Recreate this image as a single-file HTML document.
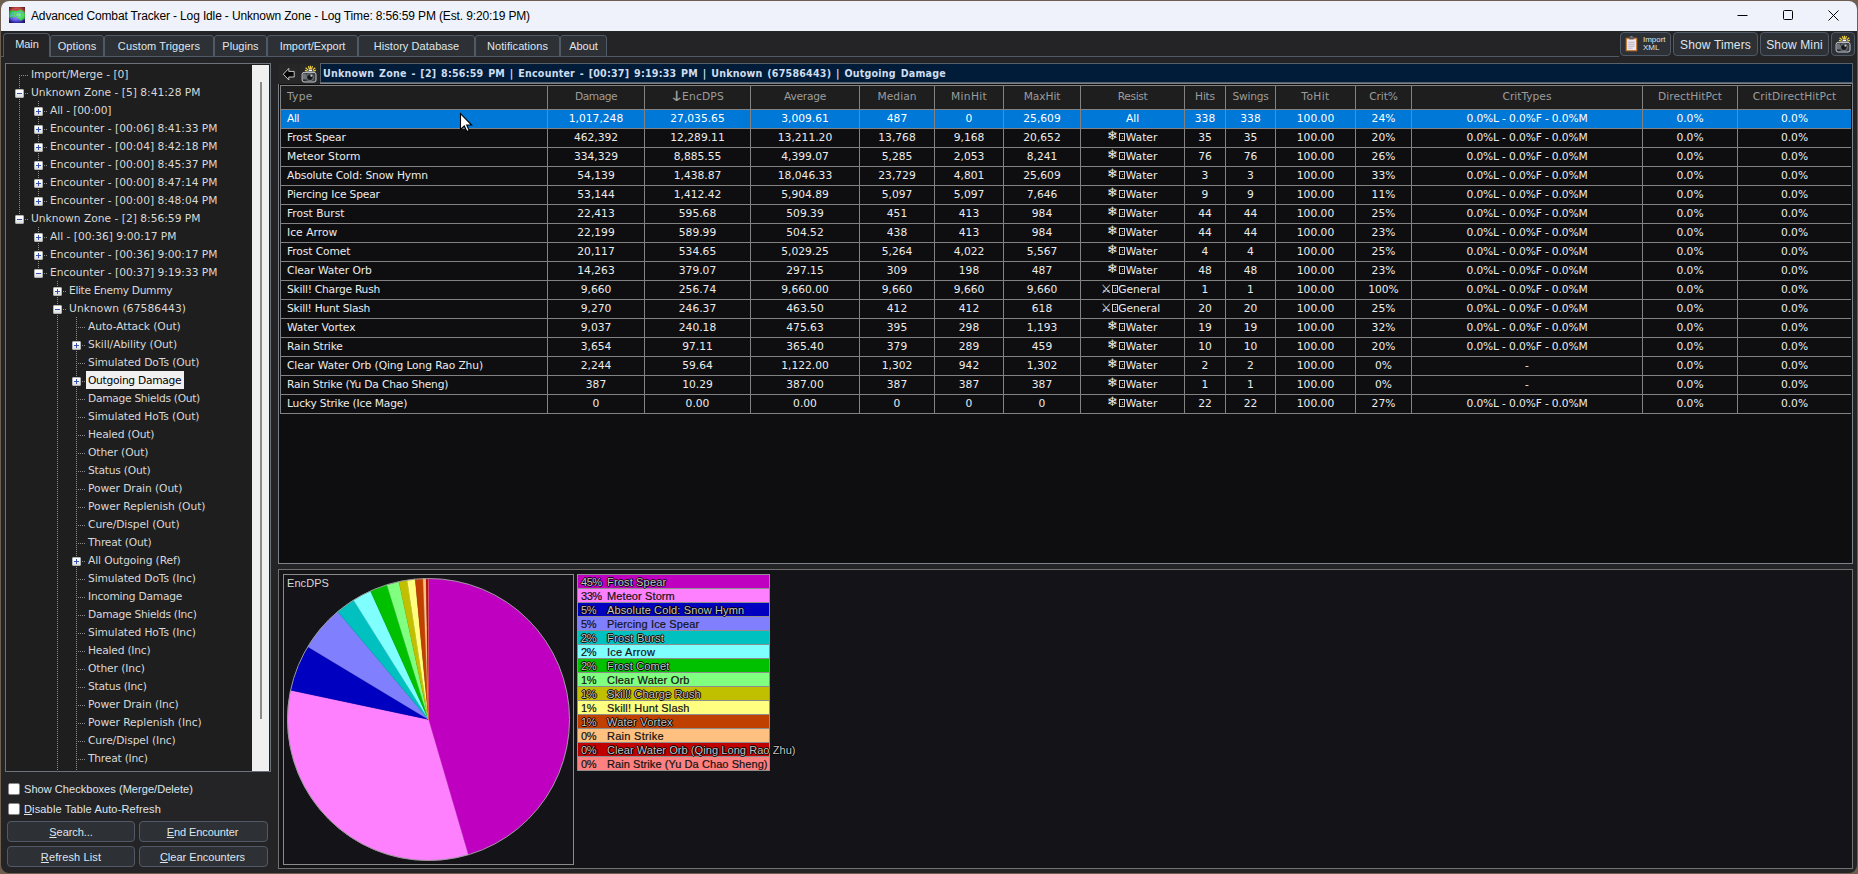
<!DOCTYPE html>
<html><head><meta charset="utf-8"><title>Advanced Combat Tracker</title>
<style>
html,body{margin:0;padding:0;background:#3a3230;}
body{width:1858px;height:874px;overflow:hidden;position:relative;font-family:'Liberation Sans',sans-serif;font-size:12px;}
.a{position:absolute;}
.t{position:absolute;white-space:pre;}
.seg{font-family:'DejaVu Sans','Liberation Sans',sans-serif;}
.segc{font-family:'DejaVu Sans Condensed','DejaVu Sans','Liberation Sans',sans-serif;}
u{text-decoration-thickness:1px;text-underline-offset:1px;}
.sf{font-family:'DejaVu Sans',sans-serif;font-size:13px;font-weight:bold;display:inline-block;width:9px;margin-right:2px;position:relative;top:-1.5px;left:-1px;line-height:0;}
.sw{font-family:'DejaVu Sans',sans-serif;font-size:12px;display:inline-block;width:10px;margin-right:1px;position:relative;top:0px;left:-0.5px;line-height:0;}
.bx{display:inline-block;width:6px;height:8px;border:1px solid rgba(255,255,255,0.8);box-sizing:border-box;margin-right:1px;vertical-align:0px;background:linear-gradient(#d8a860,#d8a860) 2px 2px/1px 1px no-repeat,linear-gradient(#d8a860,#d8a860) 2px 4px/1px 1px no-repeat;}
.ar{font-family:'DejaVu Sans',sans-serif;font-size:14px;line-height:10px;position:relative;top:1px;display:inline-block;transform:scaleX(1.35);margin-right:-1px;}
</style></head><body>
<div class="a" style="left:0px;top:0px;width:1858px;height:874px;background:#6e5e50;"></div>
<div class="a" style="left:1px;top:1px;width:1856px;height:871.6px;background:#242426;border-radius:8px;overflow:hidden;">
<div class="a" style="left:0;top:0;width:1856px;height:30px;background:#eff2fa;"></div>
</div>
<svg class="a" style="left:9px;top:7px" width="16" height="16" viewBox="0 0 16 16"><defs><radialGradient id="vg" cx="50%" cy="50%" r="72%"><stop offset="60%" stop-color="#000" stop-opacity="0"/><stop offset="100%" stop-color="#000" stop-opacity="0.75"/></radialGradient><radialGradient id="gb" cx="45%" cy="30%" r="60%"><stop offset="0" stop-color="#8a86ff"/><stop offset="1" stop-color="#3a30c0"/></radialGradient><radialGradient id="gg" cx="60%" cy="50%" r="60%"><stop offset="0" stop-color="#7cff7c"/><stop offset="1" stop-color="#22b83a"/></radialGradient></defs><rect width="16" height="16" fill="#c84848"/><path d="M0 9H16V16H0Z" fill="url(#gb)"/><path d="M0 4.2L2 3.6 3.5 3.2 5 3.5 7 4 8.5 3.9 10 3 11.5 2.4 13 3 14.5 4.6 16 5.2V12L14 12.5 12.5 13.6 11 13.5 9.5 11.5 8 10.5 6 10 3.5 10.5 0 10.8Z" fill="url(#gg)"/><text x="1" y="10.3" font-family="Liberation Sans, sans-serif" font-size="6.8" font-weight="bold" font-style="italic" fill="#6aa8d8" textLength="13.5" lengthAdjust="spacingAndGlyphs">ACT</text><rect width="16" height="16" fill="url(#vg)"/></svg>
<div class="t" style="left:31px;top:7.5px;height:16px;line-height:16px;font-size:12px;color:#000;letter-spacing:-0.140px;">Advanced Combat Tracker - Log Idle - Unknown Zone - Log Time: 8:56:59 PM (Est. 9:20:19 PM)</div>
<svg class="a" style="left:1730px;top:0" width="126" height="31" viewBox="0 0 126 31"><g stroke="#000" stroke-width="1" fill="none"><path d="M7.5 15.5h10"/><rect x="53.5" y="10.5" width="9" height="9" rx="1"/><path d="M98.5 10.5l10 10M108.5 10.5l-10 10"/></g></svg>
<div class="a" style="left:1px;top:56px;width:1618px;height:1px;background:#505a66;"></div>
<div class="a" style="left:3px;top:33px;width:47px;height:24px;background:#242426;border:1px solid #505a66;border-bottom:none;border-radius:4px 4px 0 0;box-sizing:border-box;"></div>
<div class="t" style="left:3.5px;top:35.5px;height:16px;line-height:16px;font-size:11px;color:#dfe6ee;letter-spacing:-0.036px;width:47px;text-align:center;">Main</div>
<div class="a" style="left:50px;top:35px;width:54px;height:22px;background:#2d3034;border:1px solid #505a66;border-radius:3px 3px 0 0;box-sizing:border-box;"></div>
<div class="t" style="left:50px;top:37.5px;height:16px;line-height:16px;font-size:11px;color:#dfe6ee;letter-spacing:0.097px;width:54px;text-align:center;">Options</div>
<div class="a" style="left:104px;top:35px;width:110px;height:22px;background:#2d3034;border:1px solid #505a66;border-radius:3px 3px 0 0;box-sizing:border-box;"></div>
<div class="t" style="left:104px;top:37.5px;height:16px;line-height:16px;font-size:11px;color:#dfe6ee;letter-spacing:0.106px;width:110px;text-align:center;">Custom Triggers</div>
<div class="a" style="left:214px;top:35px;width:53px;height:22px;background:#2d3034;border:1px solid #505a66;border-radius:3px 3px 0 0;box-sizing:border-box;"></div>
<div class="t" style="left:214px;top:37.5px;height:16px;line-height:16px;font-size:11px;color:#dfe6ee;letter-spacing:0.032px;width:53px;text-align:center;">Plugins</div>
<div class="a" style="left:267px;top:35px;width:91px;height:22px;background:#2d3034;border:1px solid #505a66;border-radius:3px 3px 0 0;box-sizing:border-box;"></div>
<div class="t" style="left:267px;top:37.5px;height:16px;line-height:16px;font-size:11px;color:#dfe6ee;letter-spacing:-0.025px;width:91px;text-align:center;">Import/Export</div>
<div class="a" style="left:358px;top:35px;width:117px;height:22px;background:#2d3034;border:1px solid #505a66;border-radius:3px 3px 0 0;box-sizing:border-box;"></div>
<div class="t" style="left:358px;top:37.5px;height:16px;line-height:16px;font-size:11px;color:#dfe6ee;letter-spacing:0.077px;width:117px;text-align:center;">History Database</div>
<div class="a" style="left:475px;top:35px;width:85px;height:22px;background:#2d3034;border:1px solid #505a66;border-radius:3px 3px 0 0;box-sizing:border-box;"></div>
<div class="t" style="left:475px;top:37.5px;height:16px;line-height:16px;font-size:11px;color:#dfe6ee;letter-spacing:0.083px;width:85px;text-align:center;">Notifications</div>
<div class="a" style="left:560px;top:35px;width:47px;height:22px;background:#2d3034;border:1px solid #505a66;border-radius:3px 3px 0 0;box-sizing:border-box;"></div>
<div class="t" style="left:560px;top:37.5px;height:16px;line-height:16px;font-size:11px;color:#dfe6ee;letter-spacing:-0.090px;width:47px;text-align:center;">About</div>
<div class="a" style="left:1620px;top:32px;width:51px;height:24px;background:#2d3034;border:1px solid #505a66;border-radius:4px;box-sizing:border-box;"></div>
<div class="a" style="left:1673px;top:32px;width:85px;height:24px;background:#2d3034;border:1px solid #505a66;border-radius:4px;box-sizing:border-box;"></div>
<div class="t" style="left:1673px;top:37.0px;height:16px;line-height:16px;font-size:12px;color:#dfe6ee;letter-spacing:0.131px;width:85px;text-align:center;">Show Timers</div>
<div class="a" style="left:1760px;top:32px;width:69px;height:24px;background:#2d3034;border:1px solid #505a66;border-radius:4px;box-sizing:border-box;"></div>
<div class="t" style="left:1760px;top:37.0px;height:16px;line-height:16px;font-size:12px;color:#dfe6ee;letter-spacing:0.138px;width:69px;text-align:center;">Show Mini</div>
<div class="a" style="left:1831px;top:32px;width:24px;height:24px;background:#2d3034;border:1px solid #505a66;border-radius:4px;box-sizing:border-box;"></div>
<svg class="a" style="left:1625px;top:36px" width="13" height="16" viewBox="0 0 13 16"><rect x="0.9" y="1.9" width="11.2" height="13.2" fill="#d88a3c" stroke="#7a5230" stroke-width="0.6"/><rect x="2" y="3.2" width="9" height="10.8" fill="#ebe6f4"/><rect x="4.2" y="0.6" width="4.6" height="2.8" fill="#5a5a60"/><rect x="5.6" y="0" width="1.8" height="1.2" fill="#8a8a90"/><path d="M3.2 6.3h6.4M3.2 8.3h6.4M3.2 10.3h6.4M3.2 12.2h4.4" stroke="#b4acbe" stroke-width="0.9"/></svg>
<div class="t" style="left:1643px;top:34.5px;height:10px;line-height:10px;font-size:8px;color:#dfe6ee;letter-spacing:-0.029px;">Import</div>
<div class="t" style="left:1643px;top:42.8px;height:10px;line-height:10px;font-size:8px;color:#dfe6ee;letter-spacing:0.016px;">XML</div>
<svg class="a" style="left:1835px;top:35px" width="17" height="18" viewBox="0 0 17 18"><g stroke="#f0d040" stroke-width="1.2" stroke-linecap="butt"><path d="M9.4 0.8V4.4M7.3 1.1L8.5 4.4M11.5 1.1L10.3 4.4M4.6 2.8L7 4.9M14.2 2.8L11.8 4.9M3.9 5.4L6.6 6.2M14.9 5.4L12.2 6.2"/></g><rect x="7.6" y="4.8" width="3.6" height="1.6" fill="#fff"/><rect x="5.6" y="6" width="7.6" height="1.6" fill="#70767e"/><rect x="1.1" y="7.4" width="13.9" height="9.6" rx="2" fill="#3c4046" stroke="#c4c7cc" stroke-width="1"/><rect x="2" y="8.6" width="3" height="6" fill="#6c737b"/><rect x="2" y="14.6" width="3" height="1.2" fill="#24272b"/><circle cx="8.9" cy="12.3" r="3.5" fill="#25282c" stroke="#8c9198" stroke-width="0.8"/><circle cx="8.9" cy="12.3" r="2" fill="#15171a"/><circle cx="10.3" cy="10.8" r="1" fill="#c8ccd0"/></svg>
<div class="a" style="left:5px;top:63px;width:266px;height:709px;background:#1e1e1e;border:1px solid #6d7278;box-sizing:border-box;"></div>
<div class="a" style="left:252px;top:65px;width:17px;height:706px;background:#f0f0f0;"></div>
<div class="a" style="left:260px;top:82px;width:2px;height:637px;background:#8a8a8a;"></div>
<div class="a" style="left:19px;top:75px;width:1px;height:144px;background:repeating-linear-gradient(to bottom,#8c8c8c 0 1px,transparent 1px 2px);"></div>
<div class="a" style="left:38px;top:101px;width:1px;height:101px;background:repeating-linear-gradient(to bottom,#8c8c8c 0 1px,transparent 1px 2px);"></div>
<div class="a" style="left:38px;top:227px;width:1px;height:46px;background:repeating-linear-gradient(to bottom,#8c8c8c 0 1px,transparent 1px 2px);"></div>
<div class="a" style="left:57px;top:281px;width:1px;height:490px;background:repeating-linear-gradient(to bottom,#8c8c8c 0 1px,transparent 1px 2px);"></div>
<div class="a" style="left:76px;top:317px;width:1px;height:454px;background:repeating-linear-gradient(to bottom,#8c8c8c 0 1px,transparent 1px 2px);"></div>
<div class="a" style="left:19px;top:75px;width:9px;height:1px;background:repeating-linear-gradient(to right,#8c8c8c 0 1px,transparent 1px 2px);"></div>
<div class="t seg" style="left:31px;top:67.0px;height:16px;line-height:16px;font-size:10.7px;color:#d8d8d8;letter-spacing:-0.046px;">Import/Merge - [0]</div>
<div class="a" style="left:25px;top:93px;width:3px;height:1px;background:repeating-linear-gradient(to right,#8c8c8c 0 1px,transparent 1px 2px);"></div>
<div class="a" style="left:15px;top:89px;width:9px;height:9px;background:linear-gradient(#ffffff 30%,#dcdcdc);border:1px solid #b4b4b4;box-sizing:border-box;border-radius:1px;"></div>
<div class="a" style="left:17px;top:93px;width:5px;height:1px;background:#3454b4;"></div>
<div class="t seg" style="left:31px;top:85.0px;height:16px;line-height:16px;font-size:10.7px;color:#d8d8d8;letter-spacing:-0.006px;">Unknown Zone - [5] 8:41:28 PM</div>
<div class="a" style="left:44px;top:111px;width:3px;height:1px;background:repeating-linear-gradient(to right,#8c8c8c 0 1px,transparent 1px 2px);"></div>
<div class="a" style="left:34px;top:107px;width:9px;height:9px;background:linear-gradient(#ffffff 30%,#dcdcdc);border:1px solid #b4b4b4;box-sizing:border-box;border-radius:1px;"></div>
<div class="a" style="left:36px;top:111px;width:5px;height:1px;background:#3454b4;"></div>
<div class="a" style="left:38px;top:109px;width:1px;height:5px;background:#3454b4;"></div>
<div class="t seg" style="left:50px;top:103.0px;height:16px;line-height:16px;font-size:10.7px;color:#d8d8d8;letter-spacing:-0.127px;">All - [00:00]</div>
<div class="a" style="left:44px;top:129px;width:3px;height:1px;background:repeating-linear-gradient(to right,#8c8c8c 0 1px,transparent 1px 2px);"></div>
<div class="a" style="left:34px;top:125px;width:9px;height:9px;background:linear-gradient(#ffffff 30%,#dcdcdc);border:1px solid #b4b4b4;box-sizing:border-box;border-radius:1px;"></div>
<div class="a" style="left:36px;top:129px;width:5px;height:1px;background:#3454b4;"></div>
<div class="a" style="left:38px;top:127px;width:1px;height:5px;background:#3454b4;"></div>
<div class="t seg" style="left:50px;top:121.0px;height:16px;line-height:16px;font-size:10.7px;color:#d8d8d8;letter-spacing:-0.020px;">Encounter - [00:06] 8:41:33 PM</div>
<div class="a" style="left:44px;top:147px;width:3px;height:1px;background:repeating-linear-gradient(to right,#8c8c8c 0 1px,transparent 1px 2px);"></div>
<div class="a" style="left:34px;top:143px;width:9px;height:9px;background:linear-gradient(#ffffff 30%,#dcdcdc);border:1px solid #b4b4b4;box-sizing:border-box;border-radius:1px;"></div>
<div class="a" style="left:36px;top:147px;width:5px;height:1px;background:#3454b4;"></div>
<div class="a" style="left:38px;top:145px;width:1px;height:5px;background:#3454b4;"></div>
<div class="t seg" style="left:50px;top:139.0px;height:16px;line-height:16px;font-size:10.7px;color:#d8d8d8;letter-spacing:-0.020px;">Encounter - [00:04] 8:42:18 PM</div>
<div class="a" style="left:44px;top:165px;width:3px;height:1px;background:repeating-linear-gradient(to right,#8c8c8c 0 1px,transparent 1px 2px);"></div>
<div class="a" style="left:34px;top:161px;width:9px;height:9px;background:linear-gradient(#ffffff 30%,#dcdcdc);border:1px solid #b4b4b4;box-sizing:border-box;border-radius:1px;"></div>
<div class="a" style="left:36px;top:165px;width:5px;height:1px;background:#3454b4;"></div>
<div class="a" style="left:38px;top:163px;width:1px;height:5px;background:#3454b4;"></div>
<div class="t seg" style="left:50px;top:157.0px;height:16px;line-height:16px;font-size:10.7px;color:#d8d8d8;letter-spacing:-0.020px;">Encounter - [00:00] 8:45:37 PM</div>
<div class="a" style="left:44px;top:183px;width:3px;height:1px;background:repeating-linear-gradient(to right,#8c8c8c 0 1px,transparent 1px 2px);"></div>
<div class="a" style="left:34px;top:179px;width:9px;height:9px;background:linear-gradient(#ffffff 30%,#dcdcdc);border:1px solid #b4b4b4;box-sizing:border-box;border-radius:1px;"></div>
<div class="a" style="left:36px;top:183px;width:5px;height:1px;background:#3454b4;"></div>
<div class="a" style="left:38px;top:181px;width:1px;height:5px;background:#3454b4;"></div>
<div class="t seg" style="left:50px;top:175.0px;height:16px;line-height:16px;font-size:10.7px;color:#d8d8d8;letter-spacing:-0.020px;">Encounter - [00:00] 8:47:14 PM</div>
<div class="a" style="left:44px;top:201px;width:3px;height:1px;background:repeating-linear-gradient(to right,#8c8c8c 0 1px,transparent 1px 2px);"></div>
<div class="a" style="left:34px;top:197px;width:9px;height:9px;background:linear-gradient(#ffffff 30%,#dcdcdc);border:1px solid #b4b4b4;box-sizing:border-box;border-radius:1px;"></div>
<div class="a" style="left:36px;top:201px;width:5px;height:1px;background:#3454b4;"></div>
<div class="a" style="left:38px;top:199px;width:1px;height:5px;background:#3454b4;"></div>
<div class="t seg" style="left:50px;top:193.0px;height:16px;line-height:16px;font-size:10.7px;color:#d8d8d8;letter-spacing:-0.020px;">Encounter - [00:00] 8:48:04 PM</div>
<div class="a" style="left:25px;top:219px;width:3px;height:1px;background:repeating-linear-gradient(to right,#8c8c8c 0 1px,transparent 1px 2px);"></div>
<div class="a" style="left:15px;top:215px;width:9px;height:9px;background:linear-gradient(#ffffff 30%,#dcdcdc);border:1px solid #b4b4b4;box-sizing:border-box;border-radius:1px;"></div>
<div class="a" style="left:17px;top:219px;width:5px;height:1px;background:#3454b4;"></div>
<div class="t seg" style="left:31px;top:211.0px;height:16px;line-height:16px;font-size:10.7px;color:#d8d8d8;letter-spacing:-0.006px;">Unknown Zone - [2] 8:56:59 PM</div>
<div class="a" style="left:44px;top:237px;width:3px;height:1px;background:repeating-linear-gradient(to right,#8c8c8c 0 1px,transparent 1px 2px);"></div>
<div class="a" style="left:34px;top:233px;width:9px;height:9px;background:linear-gradient(#ffffff 30%,#dcdcdc);border:1px solid #b4b4b4;box-sizing:border-box;border-radius:1px;"></div>
<div class="a" style="left:36px;top:237px;width:5px;height:1px;background:#3454b4;"></div>
<div class="a" style="left:38px;top:235px;width:1px;height:5px;background:#3454b4;"></div>
<div class="t seg" style="left:50px;top:229.0px;height:16px;line-height:16px;font-size:10.7px;color:#d8d8d8;letter-spacing:-0.008px;">All - [00:36] 9:00:17 PM</div>
<div class="a" style="left:44px;top:255px;width:3px;height:1px;background:repeating-linear-gradient(to right,#8c8c8c 0 1px,transparent 1px 2px);"></div>
<div class="a" style="left:34px;top:251px;width:9px;height:9px;background:linear-gradient(#ffffff 30%,#dcdcdc);border:1px solid #b4b4b4;box-sizing:border-box;border-radius:1px;"></div>
<div class="a" style="left:36px;top:255px;width:5px;height:1px;background:#3454b4;"></div>
<div class="a" style="left:38px;top:253px;width:1px;height:5px;background:#3454b4;"></div>
<div class="t seg" style="left:50px;top:247.0px;height:16px;line-height:16px;font-size:10.7px;color:#d8d8d8;letter-spacing:-0.020px;">Encounter - [00:36] 9:00:17 PM</div>
<div class="a" style="left:44px;top:273px;width:3px;height:1px;background:repeating-linear-gradient(to right,#8c8c8c 0 1px,transparent 1px 2px);"></div>
<div class="a" style="left:34px;top:269px;width:9px;height:9px;background:linear-gradient(#ffffff 30%,#dcdcdc);border:1px solid #b4b4b4;box-sizing:border-box;border-radius:1px;"></div>
<div class="a" style="left:36px;top:273px;width:5px;height:1px;background:#3454b4;"></div>
<div class="t seg" style="left:50px;top:265.0px;height:16px;line-height:16px;font-size:10.7px;color:#d8d8d8;letter-spacing:-0.020px;">Encounter - [00:37] 9:19:33 PM</div>
<div class="a" style="left:63px;top:291px;width:3px;height:1px;background:repeating-linear-gradient(to right,#8c8c8c 0 1px,transparent 1px 2px);"></div>
<div class="a" style="left:53px;top:287px;width:9px;height:9px;background:linear-gradient(#ffffff 30%,#dcdcdc);border:1px solid #b4b4b4;box-sizing:border-box;border-radius:1px;"></div>
<div class="a" style="left:55px;top:291px;width:5px;height:1px;background:#3454b4;"></div>
<div class="a" style="left:57px;top:289px;width:1px;height:5px;background:#3454b4;"></div>
<div class="t seg" style="left:69px;top:283.0px;height:16px;line-height:16px;font-size:10.7px;color:#d8d8d8;letter-spacing:-0.356px;">Elite Enemy Dummy</div>
<div class="a" style="left:63px;top:309px;width:3px;height:1px;background:repeating-linear-gradient(to right,#8c8c8c 0 1px,transparent 1px 2px);"></div>
<div class="a" style="left:53px;top:305px;width:9px;height:9px;background:linear-gradient(#ffffff 30%,#dcdcdc);border:1px solid #b4b4b4;box-sizing:border-box;border-radius:1px;"></div>
<div class="a" style="left:55px;top:309px;width:5px;height:1px;background:#3454b4;"></div>
<div class="t seg" style="left:69px;top:301.0px;height:16px;line-height:16px;font-size:10.7px;color:#d8d8d8;letter-spacing:0.069px;">Unknown (67586443)</div>
<div class="a" style="left:76px;top:327px;width:9px;height:1px;background:repeating-linear-gradient(to right,#8c8c8c 0 1px,transparent 1px 2px);"></div>
<div class="t seg" style="left:88px;top:319.0px;height:16px;line-height:16px;font-size:10.7px;color:#d8d8d8;letter-spacing:-0.075px;">Auto-Attack (Out)</div>
<div class="a" style="left:82px;top:345px;width:3px;height:1px;background:repeating-linear-gradient(to right,#8c8c8c 0 1px,transparent 1px 2px);"></div>
<div class="a" style="left:72px;top:341px;width:9px;height:9px;background:linear-gradient(#ffffff 30%,#dcdcdc);border:1px solid #b4b4b4;box-sizing:border-box;border-radius:1px;"></div>
<div class="a" style="left:74px;top:345px;width:5px;height:1px;background:#3454b4;"></div>
<div class="a" style="left:76px;top:343px;width:1px;height:5px;background:#3454b4;"></div>
<div class="t seg" style="left:88px;top:337.0px;height:16px;line-height:16px;font-size:10.7px;color:#d8d8d8;letter-spacing:-0.059px;">Skill/Ability (Out)</div>
<div class="a" style="left:76px;top:363px;width:9px;height:1px;background:repeating-linear-gradient(to right,#8c8c8c 0 1px,transparent 1px 2px);"></div>
<div class="t seg" style="left:88px;top:355.0px;height:16px;line-height:16px;font-size:10.7px;color:#d8d8d8;letter-spacing:-0.116px;">Simulated DoTs (Out)</div>
<div class="a" style="left:82px;top:381px;width:3px;height:1px;background:repeating-linear-gradient(to right,#8c8c8c 0 1px,transparent 1px 2px);"></div>
<div class="a" style="left:72px;top:377px;width:9px;height:9px;background:linear-gradient(#ffffff 30%,#dcdcdc);border:1px solid #b4b4b4;box-sizing:border-box;border-radius:1px;"></div>
<div class="a" style="left:74px;top:381px;width:5px;height:1px;background:#3454b4;"></div>
<div class="a" style="left:76px;top:379px;width:1px;height:5px;background:#3454b4;"></div>
<div class="a" style="left:86px;top:371px;width:98px;height:18px;background:#f0f0f0;"></div>
<div class="t seg" style="left:88px;top:373.0px;height:16px;line-height:16px;font-size:10.7px;color:#000;letter-spacing:-0.296px;">Outgoing Damage</div>
<div class="a" style="left:76px;top:399px;width:9px;height:1px;background:repeating-linear-gradient(to right,#8c8c8c 0 1px,transparent 1px 2px);"></div>
<div class="t seg" style="left:88px;top:391.0px;height:16px;line-height:16px;font-size:10.7px;color:#d8d8d8;letter-spacing:-0.302px;">Damage Shields (Out)</div>
<div class="a" style="left:76px;top:417px;width:9px;height:1px;background:repeating-linear-gradient(to right,#8c8c8c 0 1px,transparent 1px 2px);"></div>
<div class="t seg" style="left:88px;top:409.0px;height:16px;line-height:16px;font-size:10.7px;color:#d8d8d8;letter-spacing:-0.106px;">Simulated HoTs (Out)</div>
<div class="a" style="left:76px;top:435px;width:9px;height:1px;background:repeating-linear-gradient(to right,#8c8c8c 0 1px,transparent 1px 2px);"></div>
<div class="t seg" style="left:88px;top:427.0px;height:16px;line-height:16px;font-size:10.7px;color:#d8d8d8;letter-spacing:-0.192px;">Healed (Out)</div>
<div class="a" style="left:76px;top:453px;width:9px;height:1px;background:repeating-linear-gradient(to right,#8c8c8c 0 1px,transparent 1px 2px);"></div>
<div class="t seg" style="left:88px;top:445.0px;height:16px;line-height:16px;font-size:10.7px;color:#d8d8d8;letter-spacing:-0.106px;">Other (Out)</div>
<div class="a" style="left:76px;top:471px;width:9px;height:1px;background:repeating-linear-gradient(to right,#8c8c8c 0 1px,transparent 1px 2px);"></div>
<div class="t seg" style="left:88px;top:463.0px;height:16px;line-height:16px;font-size:10.7px;color:#d8d8d8;letter-spacing:-0.231px;">Status (Out)</div>
<div class="a" style="left:76px;top:489px;width:9px;height:1px;background:repeating-linear-gradient(to right,#8c8c8c 0 1px,transparent 1px 2px);"></div>
<div class="t seg" style="left:88px;top:481.0px;height:16px;line-height:16px;font-size:10.7px;color:#d8d8d8;letter-spacing:-0.085px;">Power Drain (Out)</div>
<div class="a" style="left:76px;top:507px;width:9px;height:1px;background:repeating-linear-gradient(to right,#8c8c8c 0 1px,transparent 1px 2px);"></div>
<div class="t seg" style="left:88px;top:499.0px;height:16px;line-height:16px;font-size:10.7px;color:#d8d8d8;letter-spacing:-0.065px;">Power Replenish (Out)</div>
<div class="a" style="left:76px;top:525px;width:9px;height:1px;background:repeating-linear-gradient(to right,#8c8c8c 0 1px,transparent 1px 2px);"></div>
<div class="t seg" style="left:88px;top:517.0px;height:16px;line-height:16px;font-size:10.7px;color:#d8d8d8;letter-spacing:-0.075px;">Cure/Dispel (Out)</div>
<div class="a" style="left:76px;top:543px;width:9px;height:1px;background:repeating-linear-gradient(to right,#8c8c8c 0 1px,transparent 1px 2px);"></div>
<div class="t seg" style="left:88px;top:535.0px;height:16px;line-height:16px;font-size:10.7px;color:#d8d8d8;letter-spacing:-0.199px;">Threat (Out)</div>
<div class="a" style="left:82px;top:561px;width:3px;height:1px;background:repeating-linear-gradient(to right,#8c8c8c 0 1px,transparent 1px 2px);"></div>
<div class="a" style="left:72px;top:557px;width:9px;height:9px;background:linear-gradient(#ffffff 30%,#dcdcdc);border:1px solid #b4b4b4;box-sizing:border-box;border-radius:1px;"></div>
<div class="a" style="left:74px;top:561px;width:5px;height:1px;background:#3454b4;"></div>
<div class="a" style="left:76px;top:559px;width:1px;height:5px;background:#3454b4;"></div>
<div class="t seg" style="left:88px;top:553.0px;height:16px;line-height:16px;font-size:10.7px;color:#d8d8d8;letter-spacing:-0.128px;">All Outgoing (Ref)</div>
<div class="a" style="left:76px;top:579px;width:9px;height:1px;background:repeating-linear-gradient(to right,#8c8c8c 0 1px,transparent 1px 2px);"></div>
<div class="t seg" style="left:88px;top:571.0px;height:16px;line-height:16px;font-size:10.7px;color:#d8d8d8;letter-spacing:-0.112px;">Simulated DoTs (Inc)</div>
<div class="a" style="left:76px;top:597px;width:9px;height:1px;background:repeating-linear-gradient(to right,#8c8c8c 0 1px,transparent 1px 2px);"></div>
<div class="t seg" style="left:88px;top:589.0px;height:16px;line-height:16px;font-size:10.7px;color:#d8d8d8;letter-spacing:-0.239px;">Incoming Damage</div>
<div class="a" style="left:76px;top:615px;width:9px;height:1px;background:repeating-linear-gradient(to right,#8c8c8c 0 1px,transparent 1px 2px);"></div>
<div class="t seg" style="left:88px;top:607.0px;height:16px;line-height:16px;font-size:10.7px;color:#d8d8d8;letter-spacing:-0.298px;">Damage Shields (Inc)</div>
<div class="a" style="left:76px;top:633px;width:9px;height:1px;background:repeating-linear-gradient(to right,#8c8c8c 0 1px,transparent 1px 2px);"></div>
<div class="t seg" style="left:88px;top:625.0px;height:16px;line-height:16px;font-size:10.7px;color:#d8d8d8;letter-spacing:-0.102px;">Simulated HoTs (Inc)</div>
<div class="a" style="left:76px;top:651px;width:9px;height:1px;background:repeating-linear-gradient(to right,#8c8c8c 0 1px,transparent 1px 2px);"></div>
<div class="t seg" style="left:88px;top:643.0px;height:16px;line-height:16px;font-size:10.7px;color:#d8d8d8;letter-spacing:-0.211px;">Healed (Inc)</div>
<div class="a" style="left:76px;top:669px;width:9px;height:1px;background:repeating-linear-gradient(to right,#8c8c8c 0 1px,transparent 1px 2px);"></div>
<div class="t seg" style="left:88px;top:661.0px;height:16px;line-height:16px;font-size:10.7px;color:#d8d8d8;letter-spacing:-0.099px;">Other (Inc)</div>
<div class="a" style="left:76px;top:687px;width:9px;height:1px;background:repeating-linear-gradient(to right,#8c8c8c 0 1px,transparent 1px 2px);"></div>
<div class="t seg" style="left:88px;top:679.0px;height:16px;line-height:16px;font-size:10.7px;color:#d8d8d8;letter-spacing:-0.251px;">Status (Inc)</div>
<div class="a" style="left:76px;top:705px;width:9px;height:1px;background:repeating-linear-gradient(to right,#8c8c8c 0 1px,transparent 1px 2px);"></div>
<div class="t seg" style="left:88px;top:697.0px;height:16px;line-height:16px;font-size:10.7px;color:#d8d8d8;letter-spacing:-0.092px;">Power Drain (Inc)</div>
<div class="a" style="left:76px;top:723px;width:9px;height:1px;background:repeating-linear-gradient(to right,#8c8c8c 0 1px,transparent 1px 2px);"></div>
<div class="t seg" style="left:88px;top:715.0px;height:16px;line-height:16px;font-size:10.7px;color:#d8d8d8;letter-spacing:-0.076px;">Power Replenish (Inc)</div>
<div class="a" style="left:76px;top:741px;width:9px;height:1px;background:repeating-linear-gradient(to right,#8c8c8c 0 1px,transparent 1px 2px);"></div>
<div class="t seg" style="left:88px;top:733.0px;height:16px;line-height:16px;font-size:10.7px;color:#d8d8d8;letter-spacing:-0.089px;">Cure/Dispel (Inc)</div>
<div class="a" style="left:76px;top:759px;width:9px;height:1px;background:repeating-linear-gradient(to right,#8c8c8c 0 1px,transparent 1px 2px);"></div>
<div class="t seg" style="left:88px;top:751.0px;height:16px;line-height:16px;font-size:10.7px;color:#d8d8d8;letter-spacing:-0.219px;">Threat (Inc)</div>
<div class="a" style="left:8px;top:783px;width:12px;height:12px;background:#fff;border:1px solid #888;border-radius:2px;box-sizing:border-box;"></div>
<div class="a" style="left:8px;top:803px;width:12px;height:12px;background:#fff;border:1px solid #888;border-radius:2px;box-sizing:border-box;"></div>
<div class="t" style="left:24px;top:781.0px;height:16px;line-height:16px;font-size:11px;color:#dfe6ee;letter-spacing:0.049px;">Show Checkboxes (Merge/Delete)</div>
<div class="t" style="left:24px;top:801.0px;height:16px;line-height:16px;font-size:11px;color:#dfe6ee;letter-spacing:0.150px;"><u>D</u>isable Table Auto-Refresh</div>
<div class="a" style="left:7px;top:821px;width:128px;height:21px;background:#2d3034;border:1px solid #505a66;border-radius:4px;box-sizing:border-box;"></div>
<div class="t" style="left:7px;top:823.5px;height:16px;line-height:16px;font-size:11px;color:#dfe6ee;letter-spacing:-0.081px;width:128px;text-align:center;"><u>S</u>earch...</div>
<div class="a" style="left:139px;top:821px;width:129px;height:21px;background:#2d3034;border:1px solid #505a66;border-radius:4px;box-sizing:border-box;"></div>
<div class="t" style="left:138px;top:823.5px;height:16px;line-height:16px;font-size:11px;color:#dfe6ee;letter-spacing:-0.106px;width:129px;text-align:center;"><u>E</u>nd Encounter</div>
<div class="a" style="left:7px;top:846px;width:128px;height:21px;background:#2d3034;border:1px solid #505a66;border-radius:4px;box-sizing:border-box;"></div>
<div class="t" style="left:7px;top:848.5px;height:16px;line-height:16px;font-size:11px;color:#dfe6ee;letter-spacing:0.133px;width:128px;text-align:center;"><u>R</u>efresh List</div>
<div class="a" style="left:139px;top:846px;width:129px;height:21px;background:#2d3034;border:1px solid #505a66;border-radius:4px;box-sizing:border-box;"></div>
<div class="t" style="left:138px;top:848.5px;height:16px;line-height:16px;font-size:11px;color:#dfe6ee;letter-spacing:0.013px;width:129px;text-align:center;"><u>C</u>lear Encounters</div>
<div class="a" style="left:278px;top:83px;width:1575px;height:481px;background:#0e0e10;border:1px solid #7c818a;box-sizing:border-box;"></div>
<div class="a" style="left:278px;top:83px;width:42px;height:1px;background:#242426;"></div>
<div class="a" style="left:279px;top:64px;width:19px;height:20px;background:#272727;"></div>
<div class="a" style="left:299px;top:64px;width:20px;height:20px;background:#272727;"></div>
<svg class="a" style="left:281px;top:66px" width="16" height="16" viewBox="0 0 16 16"><path d="M2.3 8.2L7.8 2.4V5.4H13.2V11H7.8V14Z" fill="#050505" stroke="#c4c4c4" stroke-width="1" stroke-linejoin="miter"/></svg>
<svg class="a" style="left:301px;top:65px" width="17" height="18" viewBox="0 0 17 18"><g stroke="#f0d040" stroke-width="1.2" stroke-linecap="butt"><path d="M9.4 0.8V4.4M7.3 1.1L8.5 4.4M11.5 1.1L10.3 4.4M4.6 2.8L7 4.9M14.2 2.8L11.8 4.9M3.9 5.4L6.6 6.2M14.9 5.4L12.2 6.2"/></g><rect x="7.6" y="4.8" width="3.6" height="1.6" fill="#fff"/><rect x="5.6" y="6" width="7.6" height="1.6" fill="#70767e"/><rect x="1.1" y="7.4" width="13.9" height="9.6" rx="2" fill="#3c4046" stroke="#c4c7cc" stroke-width="1"/><rect x="2" y="8.6" width="3" height="6" fill="#6c737b"/><rect x="2" y="14.6" width="3" height="1.2" fill="#24272b"/><circle cx="8.9" cy="12.3" r="3.5" fill="#25282c" stroke="#8c9198" stroke-width="0.8"/><circle cx="8.9" cy="12.3" r="2" fill="#15171a"/><circle cx="10.3" cy="10.8" r="1" fill="#c8ccd0"/></svg>
<div class="a" style="left:320px;top:63px;width:1533px;height:20px;background:#001c38;border:1px solid #5a6068;box-sizing:border-box;"></div>
<div class="t segc" style="left:323px;top:65.0px;height:16px;line-height:16px;font-size:10.6px;color:#cedcf0;letter-spacing:0.222px;font-weight:bold;word-spacing:1.2px;">Unknown Zone - [2] 8:56:59 PM | Encounter - [00:37] 9:19:33 PM | Unknown (67586443) | Outgoing Damage</div>
<div class="a" style="left:280px;top:85px;width:1571px;height:25px;background:#1e1e1e;"></div>
<div class="a" style="left:280px;top:110px;width:1571px;height:18px;background:#0078d7;"></div>
<div class="a" style="left:280px;top:85px;width:1571px;height:1px;background:#828282;"></div>
<div class="a" style="left:280px;top:109px;width:1571px;height:1px;background:#828282;"></div>
<div class="a" style="left:280px;top:128px;width:1571px;height:1px;background:#828282;"></div>
<div class="a" style="left:280px;top:147px;width:1571px;height:1px;background:#828282;"></div>
<div class="a" style="left:280px;top:166px;width:1571px;height:1px;background:#828282;"></div>
<div class="a" style="left:280px;top:185px;width:1571px;height:1px;background:#828282;"></div>
<div class="a" style="left:280px;top:204px;width:1571px;height:1px;background:#828282;"></div>
<div class="a" style="left:280px;top:223px;width:1571px;height:1px;background:#828282;"></div>
<div class="a" style="left:280px;top:242px;width:1571px;height:1px;background:#828282;"></div>
<div class="a" style="left:280px;top:261px;width:1571px;height:1px;background:#828282;"></div>
<div class="a" style="left:280px;top:280px;width:1571px;height:1px;background:#828282;"></div>
<div class="a" style="left:280px;top:299px;width:1571px;height:1px;background:#828282;"></div>
<div class="a" style="left:280px;top:318px;width:1571px;height:1px;background:#828282;"></div>
<div class="a" style="left:280px;top:337px;width:1571px;height:1px;background:#828282;"></div>
<div class="a" style="left:280px;top:356px;width:1571px;height:1px;background:#828282;"></div>
<div class="a" style="left:280px;top:375px;width:1571px;height:1px;background:#828282;"></div>
<div class="a" style="left:280px;top:394px;width:1571px;height:1px;background:#828282;"></div>
<div class="a" style="left:280px;top:413px;width:1571px;height:1px;background:#828282;"></div>
<div class="a" style="left:280px;top:85px;width:1px;height:329px;background:#828282;"></div>
<div class="a" style="left:547px;top:85px;width:1px;height:329px;background:#828282;"></div>
<div class="a" style="left:644px;top:85px;width:1px;height:329px;background:#828282;"></div>
<div class="a" style="left:750px;top:85px;width:1px;height:329px;background:#828282;"></div>
<div class="a" style="left:859px;top:85px;width:1px;height:329px;background:#828282;"></div>
<div class="a" style="left:934px;top:85px;width:1px;height:329px;background:#828282;"></div>
<div class="a" style="left:1003px;top:85px;width:1px;height:329px;background:#828282;"></div>
<div class="a" style="left:1080px;top:85px;width:1px;height:329px;background:#828282;"></div>
<div class="a" style="left:1184px;top:85px;width:1px;height:329px;background:#828282;"></div>
<div class="a" style="left:1225px;top:85px;width:1px;height:329px;background:#828282;"></div>
<div class="a" style="left:1275px;top:85px;width:1px;height:329px;background:#828282;"></div>
<div class="a" style="left:1355px;top:85px;width:1px;height:329px;background:#828282;"></div>
<div class="a" style="left:1411px;top:85px;width:1px;height:329px;background:#828282;"></div>
<div class="a" style="left:1642px;top:85px;width:1px;height:329px;background:#828282;"></div>
<div class="a" style="left:1737px;top:85px;width:1px;height:329px;background:#828282;"></div>
<div class="t seg" style="left:287px;top:88.7px;height:16px;line-height:16px;font-size:10.7px;color:#9c9c9c;letter-spacing:0.238px;">Type</div>
<div class="t seg" style="left:548px;top:88.7px;height:16px;line-height:16px;font-size:10.7px;color:#9c9c9c;letter-spacing:-0.518px;width:96px;text-align:center;">Damage</div>
<div class="t seg" style="left:645px;top:88.7px;height:16px;line-height:16px;font-size:10.7px;color:#9c9c9c;letter-spacing:0.167px;width:105px;text-align:center;"><span class="ar">↓</span>EncDPS</div>
<div class="t seg" style="left:751px;top:88.7px;height:16px;line-height:16px;font-size:10.7px;color:#9c9c9c;letter-spacing:-0.270px;width:108px;text-align:center;">Average</div>
<div class="t seg" style="left:860px;top:88.7px;height:16px;line-height:16px;font-size:10.7px;color:#9c9c9c;letter-spacing:0.021px;width:74px;text-align:center;">Median</div>
<div class="t seg" style="left:935px;top:88.7px;height:16px;line-height:16px;font-size:10.7px;color:#9c9c9c;letter-spacing:0.305px;width:68px;text-align:center;">MinHit</div>
<div class="t seg" style="left:1004px;top:88.7px;height:16px;line-height:16px;font-size:10.7px;color:#9c9c9c;letter-spacing:-0.099px;width:76px;text-align:center;">MaxHit</div>
<div class="t seg" style="left:1081px;top:88.7px;height:16px;line-height:16px;font-size:10.7px;color:#9c9c9c;letter-spacing:-0.355px;width:103px;text-align:center;">Resist</div>
<div class="t seg" style="left:1185px;top:88.7px;height:16px;line-height:16px;font-size:10.7px;color:#9c9c9c;letter-spacing:-0.241px;width:40px;text-align:center;">Hits</div>
<div class="t seg" style="left:1226px;top:88.7px;height:16px;line-height:16px;font-size:10.7px;color:#9c9c9c;letter-spacing:-0.304px;width:49px;text-align:center;">Swings</div>
<div class="t seg" style="left:1276px;top:88.7px;height:16px;line-height:16px;font-size:10.7px;color:#9c9c9c;letter-spacing:0.389px;width:79px;text-align:center;">ToHit</div>
<div class="t seg" style="left:1356px;top:88.7px;height:16px;line-height:16px;font-size:10.7px;color:#9c9c9c;letter-spacing:-0.154px;width:55px;text-align:center;">Crit%</div>
<div class="t seg" style="left:1412px;top:88.7px;height:16px;line-height:16px;font-size:10.7px;color:#9c9c9c;letter-spacing:-0.016px;width:230px;text-align:center;">CritTypes</div>
<div class="t seg" style="left:1643px;top:88.7px;height:16px;line-height:16px;font-size:10.7px;color:#9c9c9c;letter-spacing:0.023px;width:94px;text-align:center;">DirectHitPct</div>
<div class="t seg" style="left:1738px;top:88.7px;height:16px;line-height:16px;font-size:10.7px;color:#9c9c9c;letter-spacing:0.035px;width:113px;text-align:center;">CritDirectHitPct</div>
<div class="t seg" style="left:287px;top:111.0px;height:16px;line-height:16px;font-size:10.7px;color:#ffffff;letter-spacing:-0.417px;">All</div>
<div class="t seg" style="left:548px;top:111.0px;height:16px;line-height:16px;font-size:10.7px;color:#ffffff;width:96px;text-align:center;">1,017,248</div>
<div class="t seg" style="left:645px;top:111.0px;height:16px;line-height:16px;font-size:10.7px;color:#ffffff;width:105px;text-align:center;">27,035.65</div>
<div class="t seg" style="left:751px;top:111.0px;height:16px;line-height:16px;font-size:10.7px;color:#ffffff;width:108px;text-align:center;">3,009.61</div>
<div class="t seg" style="left:860px;top:111.0px;height:16px;line-height:16px;font-size:10.7px;color:#ffffff;width:74px;text-align:center;">487</div>
<div class="t seg" style="left:935px;top:111.0px;height:16px;line-height:16px;font-size:10.7px;color:#ffffff;width:68px;text-align:center;">0</div>
<div class="t seg" style="left:1004px;top:111.0px;height:16px;line-height:16px;font-size:10.7px;color:#ffffff;width:76px;text-align:center;">25,609</div>
<div class="t seg" style="left:1081px;top:111.0px;height:16px;line-height:16px;font-size:10.7px;color:#ffffff;width:103px;text-align:center;">All</div>
<div class="t seg" style="left:1185px;top:111.0px;height:16px;line-height:16px;font-size:10.7px;color:#ffffff;width:40px;text-align:center;">338</div>
<div class="t seg" style="left:1226px;top:111.0px;height:16px;line-height:16px;font-size:10.7px;color:#ffffff;width:49px;text-align:center;">338</div>
<div class="t seg" style="left:1276px;top:111.0px;height:16px;line-height:16px;font-size:10.7px;color:#ffffff;width:79px;text-align:center;">100.00</div>
<div class="t seg" style="left:1356px;top:111.0px;height:16px;line-height:16px;font-size:10.7px;color:#ffffff;width:55px;text-align:center;">24%</div>
<div class="t seg" style="left:1412px;top:111.0px;height:16px;line-height:16px;font-size:10.7px;color:#ffffff;letter-spacing:-0.147px;width:230px;text-align:center;">0.0%L - 0.0%F - 0.0%M</div>
<div class="t seg" style="left:1643px;top:111.0px;height:16px;line-height:16px;font-size:10.7px;color:#ffffff;width:94px;text-align:center;">0.0%</div>
<div class="t seg" style="left:1738px;top:111.0px;height:16px;line-height:16px;font-size:10.7px;color:#ffffff;width:113px;text-align:center;">0.0%</div>
<div class="t seg" style="left:287px;top:130.0px;height:16px;line-height:16px;font-size:10.7px;color:#ececec;letter-spacing:-0.147px;">Frost Spear</div>
<div class="t seg" style="left:548px;top:130.0px;height:16px;line-height:16px;font-size:10.7px;color:#ececec;width:96px;text-align:center;">462,392</div>
<div class="t seg" style="left:645px;top:130.0px;height:16px;line-height:16px;font-size:10.7px;color:#ececec;width:105px;text-align:center;">12,289.11</div>
<div class="t seg" style="left:751px;top:130.0px;height:16px;line-height:16px;font-size:10.7px;color:#ececec;width:108px;text-align:center;">13,211.20</div>
<div class="t seg" style="left:860px;top:130.0px;height:16px;line-height:16px;font-size:10.7px;color:#ececec;width:74px;text-align:center;">13,768</div>
<div class="t seg" style="left:935px;top:130.0px;height:16px;line-height:16px;font-size:10.7px;color:#ececec;width:68px;text-align:center;">9,168</div>
<div class="t seg" style="left:1004px;top:130.0px;height:16px;line-height:16px;font-size:10.7px;color:#ececec;width:76px;text-align:center;">20,652</div>
<div class="t seg" style="left:1081px;top:130.0px;height:16px;line-height:16px;font-size:10.7px;color:#ececec;width:103px;text-align:center;"><span class="sf">❄</span><span class="bx"></span>Water</div>
<div class="t seg" style="left:1185px;top:130.0px;height:16px;line-height:16px;font-size:10.7px;color:#ececec;width:40px;text-align:center;">35</div>
<div class="t seg" style="left:1226px;top:130.0px;height:16px;line-height:16px;font-size:10.7px;color:#ececec;width:49px;text-align:center;">35</div>
<div class="t seg" style="left:1276px;top:130.0px;height:16px;line-height:16px;font-size:10.7px;color:#ececec;width:79px;text-align:center;">100.00</div>
<div class="t seg" style="left:1356px;top:130.0px;height:16px;line-height:16px;font-size:10.7px;color:#ececec;width:55px;text-align:center;">20%</div>
<div class="t seg" style="left:1412px;top:130.0px;height:16px;line-height:16px;font-size:10.7px;color:#ececec;letter-spacing:-0.147px;width:230px;text-align:center;">0.0%L - 0.0%F - 0.0%M</div>
<div class="t seg" style="left:1643px;top:130.0px;height:16px;line-height:16px;font-size:10.7px;color:#ececec;width:94px;text-align:center;">0.0%</div>
<div class="t seg" style="left:1738px;top:130.0px;height:16px;line-height:16px;font-size:10.7px;color:#ececec;width:113px;text-align:center;">0.0%</div>
<div class="t seg" style="left:287px;top:149.0px;height:16px;line-height:16px;font-size:10.7px;color:#ececec;letter-spacing:0.031px;">Meteor Storm</div>
<div class="t seg" style="left:548px;top:149.0px;height:16px;line-height:16px;font-size:10.7px;color:#ececec;width:96px;text-align:center;">334,329</div>
<div class="t seg" style="left:645px;top:149.0px;height:16px;line-height:16px;font-size:10.7px;color:#ececec;width:105px;text-align:center;">8,885.55</div>
<div class="t seg" style="left:751px;top:149.0px;height:16px;line-height:16px;font-size:10.7px;color:#ececec;width:108px;text-align:center;">4,399.07</div>
<div class="t seg" style="left:860px;top:149.0px;height:16px;line-height:16px;font-size:10.7px;color:#ececec;width:74px;text-align:center;">5,285</div>
<div class="t seg" style="left:935px;top:149.0px;height:16px;line-height:16px;font-size:10.7px;color:#ececec;width:68px;text-align:center;">2,053</div>
<div class="t seg" style="left:1004px;top:149.0px;height:16px;line-height:16px;font-size:10.7px;color:#ececec;width:76px;text-align:center;">8,241</div>
<div class="t seg" style="left:1081px;top:149.0px;height:16px;line-height:16px;font-size:10.7px;color:#ececec;width:103px;text-align:center;"><span class="sf">❄</span><span class="bx"></span>Water</div>
<div class="t seg" style="left:1185px;top:149.0px;height:16px;line-height:16px;font-size:10.7px;color:#ececec;width:40px;text-align:center;">76</div>
<div class="t seg" style="left:1226px;top:149.0px;height:16px;line-height:16px;font-size:10.7px;color:#ececec;width:49px;text-align:center;">76</div>
<div class="t seg" style="left:1276px;top:149.0px;height:16px;line-height:16px;font-size:10.7px;color:#ececec;width:79px;text-align:center;">100.00</div>
<div class="t seg" style="left:1356px;top:149.0px;height:16px;line-height:16px;font-size:10.7px;color:#ececec;width:55px;text-align:center;">26%</div>
<div class="t seg" style="left:1412px;top:149.0px;height:16px;line-height:16px;font-size:10.7px;color:#ececec;letter-spacing:-0.147px;width:230px;text-align:center;">0.0%L - 0.0%F - 0.0%M</div>
<div class="t seg" style="left:1643px;top:149.0px;height:16px;line-height:16px;font-size:10.7px;color:#ececec;width:94px;text-align:center;">0.0%</div>
<div class="t seg" style="left:1738px;top:149.0px;height:16px;line-height:16px;font-size:10.7px;color:#ececec;width:113px;text-align:center;">0.0%</div>
<div class="t seg" style="left:287px;top:168.0px;height:16px;line-height:16px;font-size:10.7px;color:#ececec;letter-spacing:-0.161px;">Absolute Cold: Snow Hymn</div>
<div class="t seg" style="left:548px;top:168.0px;height:16px;line-height:16px;font-size:10.7px;color:#ececec;width:96px;text-align:center;">54,139</div>
<div class="t seg" style="left:645px;top:168.0px;height:16px;line-height:16px;font-size:10.7px;color:#ececec;width:105px;text-align:center;">1,438.87</div>
<div class="t seg" style="left:751px;top:168.0px;height:16px;line-height:16px;font-size:10.7px;color:#ececec;width:108px;text-align:center;">18,046.33</div>
<div class="t seg" style="left:860px;top:168.0px;height:16px;line-height:16px;font-size:10.7px;color:#ececec;width:74px;text-align:center;">23,729</div>
<div class="t seg" style="left:935px;top:168.0px;height:16px;line-height:16px;font-size:10.7px;color:#ececec;width:68px;text-align:center;">4,801</div>
<div class="t seg" style="left:1004px;top:168.0px;height:16px;line-height:16px;font-size:10.7px;color:#ececec;width:76px;text-align:center;">25,609</div>
<div class="t seg" style="left:1081px;top:168.0px;height:16px;line-height:16px;font-size:10.7px;color:#ececec;width:103px;text-align:center;"><span class="sf">❄</span><span class="bx"></span>Water</div>
<div class="t seg" style="left:1185px;top:168.0px;height:16px;line-height:16px;font-size:10.7px;color:#ececec;width:40px;text-align:center;">3</div>
<div class="t seg" style="left:1226px;top:168.0px;height:16px;line-height:16px;font-size:10.7px;color:#ececec;width:49px;text-align:center;">3</div>
<div class="t seg" style="left:1276px;top:168.0px;height:16px;line-height:16px;font-size:10.7px;color:#ececec;width:79px;text-align:center;">100.00</div>
<div class="t seg" style="left:1356px;top:168.0px;height:16px;line-height:16px;font-size:10.7px;color:#ececec;width:55px;text-align:center;">33%</div>
<div class="t seg" style="left:1412px;top:168.0px;height:16px;line-height:16px;font-size:10.7px;color:#ececec;letter-spacing:-0.147px;width:230px;text-align:center;">0.0%L - 0.0%F - 0.0%M</div>
<div class="t seg" style="left:1643px;top:168.0px;height:16px;line-height:16px;font-size:10.7px;color:#ececec;width:94px;text-align:center;">0.0%</div>
<div class="t seg" style="left:1738px;top:168.0px;height:16px;line-height:16px;font-size:10.7px;color:#ececec;width:113px;text-align:center;">0.0%</div>
<div class="t seg" style="left:287px;top:187.0px;height:16px;line-height:16px;font-size:10.7px;color:#ececec;letter-spacing:-0.167px;">Piercing Ice Spear</div>
<div class="t seg" style="left:548px;top:187.0px;height:16px;line-height:16px;font-size:10.7px;color:#ececec;width:96px;text-align:center;">53,144</div>
<div class="t seg" style="left:645px;top:187.0px;height:16px;line-height:16px;font-size:10.7px;color:#ececec;width:105px;text-align:center;">1,412.42</div>
<div class="t seg" style="left:751px;top:187.0px;height:16px;line-height:16px;font-size:10.7px;color:#ececec;width:108px;text-align:center;">5,904.89</div>
<div class="t seg" style="left:860px;top:187.0px;height:16px;line-height:16px;font-size:10.7px;color:#ececec;width:74px;text-align:center;">5,097</div>
<div class="t seg" style="left:935px;top:187.0px;height:16px;line-height:16px;font-size:10.7px;color:#ececec;width:68px;text-align:center;">5,097</div>
<div class="t seg" style="left:1004px;top:187.0px;height:16px;line-height:16px;font-size:10.7px;color:#ececec;width:76px;text-align:center;">7,646</div>
<div class="t seg" style="left:1081px;top:187.0px;height:16px;line-height:16px;font-size:10.7px;color:#ececec;width:103px;text-align:center;"><span class="sf">❄</span><span class="bx"></span>Water</div>
<div class="t seg" style="left:1185px;top:187.0px;height:16px;line-height:16px;font-size:10.7px;color:#ececec;width:40px;text-align:center;">9</div>
<div class="t seg" style="left:1226px;top:187.0px;height:16px;line-height:16px;font-size:10.7px;color:#ececec;width:49px;text-align:center;">9</div>
<div class="t seg" style="left:1276px;top:187.0px;height:16px;line-height:16px;font-size:10.7px;color:#ececec;width:79px;text-align:center;">100.00</div>
<div class="t seg" style="left:1356px;top:187.0px;height:16px;line-height:16px;font-size:10.7px;color:#ececec;width:55px;text-align:center;">11%</div>
<div class="t seg" style="left:1412px;top:187.0px;height:16px;line-height:16px;font-size:10.7px;color:#ececec;letter-spacing:-0.147px;width:230px;text-align:center;">0.0%L - 0.0%F - 0.0%M</div>
<div class="t seg" style="left:1643px;top:187.0px;height:16px;line-height:16px;font-size:10.7px;color:#ececec;width:94px;text-align:center;">0.0%</div>
<div class="t seg" style="left:1738px;top:187.0px;height:16px;line-height:16px;font-size:10.7px;color:#ececec;width:113px;text-align:center;">0.0%</div>
<div class="t seg" style="left:287px;top:206.0px;height:16px;line-height:16px;font-size:10.7px;color:#ececec;letter-spacing:-0.008px;">Frost Burst</div>
<div class="t seg" style="left:548px;top:206.0px;height:16px;line-height:16px;font-size:10.7px;color:#ececec;width:96px;text-align:center;">22,413</div>
<div class="t seg" style="left:645px;top:206.0px;height:16px;line-height:16px;font-size:10.7px;color:#ececec;width:105px;text-align:center;">595.68</div>
<div class="t seg" style="left:751px;top:206.0px;height:16px;line-height:16px;font-size:10.7px;color:#ececec;width:108px;text-align:center;">509.39</div>
<div class="t seg" style="left:860px;top:206.0px;height:16px;line-height:16px;font-size:10.7px;color:#ececec;width:74px;text-align:center;">451</div>
<div class="t seg" style="left:935px;top:206.0px;height:16px;line-height:16px;font-size:10.7px;color:#ececec;width:68px;text-align:center;">413</div>
<div class="t seg" style="left:1004px;top:206.0px;height:16px;line-height:16px;font-size:10.7px;color:#ececec;width:76px;text-align:center;">984</div>
<div class="t seg" style="left:1081px;top:206.0px;height:16px;line-height:16px;font-size:10.7px;color:#ececec;width:103px;text-align:center;"><span class="sf">❄</span><span class="bx"></span>Water</div>
<div class="t seg" style="left:1185px;top:206.0px;height:16px;line-height:16px;font-size:10.7px;color:#ececec;width:40px;text-align:center;">44</div>
<div class="t seg" style="left:1226px;top:206.0px;height:16px;line-height:16px;font-size:10.7px;color:#ececec;width:49px;text-align:center;">44</div>
<div class="t seg" style="left:1276px;top:206.0px;height:16px;line-height:16px;font-size:10.7px;color:#ececec;width:79px;text-align:center;">100.00</div>
<div class="t seg" style="left:1356px;top:206.0px;height:16px;line-height:16px;font-size:10.7px;color:#ececec;width:55px;text-align:center;">25%</div>
<div class="t seg" style="left:1412px;top:206.0px;height:16px;line-height:16px;font-size:10.7px;color:#ececec;letter-spacing:-0.147px;width:230px;text-align:center;">0.0%L - 0.0%F - 0.0%M</div>
<div class="t seg" style="left:1643px;top:206.0px;height:16px;line-height:16px;font-size:10.7px;color:#ececec;width:94px;text-align:center;">0.0%</div>
<div class="t seg" style="left:1738px;top:206.0px;height:16px;line-height:16px;font-size:10.7px;color:#ececec;width:113px;text-align:center;">0.0%</div>
<div class="t seg" style="left:287px;top:225.0px;height:16px;line-height:16px;font-size:10.7px;color:#ececec;letter-spacing:0.048px;">Ice Arrow</div>
<div class="t seg" style="left:548px;top:225.0px;height:16px;line-height:16px;font-size:10.7px;color:#ececec;width:96px;text-align:center;">22,199</div>
<div class="t seg" style="left:645px;top:225.0px;height:16px;line-height:16px;font-size:10.7px;color:#ececec;width:105px;text-align:center;">589.99</div>
<div class="t seg" style="left:751px;top:225.0px;height:16px;line-height:16px;font-size:10.7px;color:#ececec;width:108px;text-align:center;">504.52</div>
<div class="t seg" style="left:860px;top:225.0px;height:16px;line-height:16px;font-size:10.7px;color:#ececec;width:74px;text-align:center;">438</div>
<div class="t seg" style="left:935px;top:225.0px;height:16px;line-height:16px;font-size:10.7px;color:#ececec;width:68px;text-align:center;">413</div>
<div class="t seg" style="left:1004px;top:225.0px;height:16px;line-height:16px;font-size:10.7px;color:#ececec;width:76px;text-align:center;">984</div>
<div class="t seg" style="left:1081px;top:225.0px;height:16px;line-height:16px;font-size:10.7px;color:#ececec;width:103px;text-align:center;"><span class="sf">❄</span><span class="bx"></span>Water</div>
<div class="t seg" style="left:1185px;top:225.0px;height:16px;line-height:16px;font-size:10.7px;color:#ececec;width:40px;text-align:center;">44</div>
<div class="t seg" style="left:1226px;top:225.0px;height:16px;line-height:16px;font-size:10.7px;color:#ececec;width:49px;text-align:center;">44</div>
<div class="t seg" style="left:1276px;top:225.0px;height:16px;line-height:16px;font-size:10.7px;color:#ececec;width:79px;text-align:center;">100.00</div>
<div class="t seg" style="left:1356px;top:225.0px;height:16px;line-height:16px;font-size:10.7px;color:#ececec;width:55px;text-align:center;">23%</div>
<div class="t seg" style="left:1412px;top:225.0px;height:16px;line-height:16px;font-size:10.7px;color:#ececec;letter-spacing:-0.147px;width:230px;text-align:center;">0.0%L - 0.0%F - 0.0%M</div>
<div class="t seg" style="left:1643px;top:225.0px;height:16px;line-height:16px;font-size:10.7px;color:#ececec;width:94px;text-align:center;">0.0%</div>
<div class="t seg" style="left:1738px;top:225.0px;height:16px;line-height:16px;font-size:10.7px;color:#ececec;width:113px;text-align:center;">0.0%</div>
<div class="t seg" style="left:287px;top:244.0px;height:16px;line-height:16px;font-size:10.7px;color:#ececec;letter-spacing:-0.091px;">Frost Comet</div>
<div class="t seg" style="left:548px;top:244.0px;height:16px;line-height:16px;font-size:10.7px;color:#ececec;width:96px;text-align:center;">20,117</div>
<div class="t seg" style="left:645px;top:244.0px;height:16px;line-height:16px;font-size:10.7px;color:#ececec;width:105px;text-align:center;">534.65</div>
<div class="t seg" style="left:751px;top:244.0px;height:16px;line-height:16px;font-size:10.7px;color:#ececec;width:108px;text-align:center;">5,029.25</div>
<div class="t seg" style="left:860px;top:244.0px;height:16px;line-height:16px;font-size:10.7px;color:#ececec;width:74px;text-align:center;">5,264</div>
<div class="t seg" style="left:935px;top:244.0px;height:16px;line-height:16px;font-size:10.7px;color:#ececec;width:68px;text-align:center;">4,022</div>
<div class="t seg" style="left:1004px;top:244.0px;height:16px;line-height:16px;font-size:10.7px;color:#ececec;width:76px;text-align:center;">5,567</div>
<div class="t seg" style="left:1081px;top:244.0px;height:16px;line-height:16px;font-size:10.7px;color:#ececec;width:103px;text-align:center;"><span class="sf">❄</span><span class="bx"></span>Water</div>
<div class="t seg" style="left:1185px;top:244.0px;height:16px;line-height:16px;font-size:10.7px;color:#ececec;width:40px;text-align:center;">4</div>
<div class="t seg" style="left:1226px;top:244.0px;height:16px;line-height:16px;font-size:10.7px;color:#ececec;width:49px;text-align:center;">4</div>
<div class="t seg" style="left:1276px;top:244.0px;height:16px;line-height:16px;font-size:10.7px;color:#ececec;width:79px;text-align:center;">100.00</div>
<div class="t seg" style="left:1356px;top:244.0px;height:16px;line-height:16px;font-size:10.7px;color:#ececec;width:55px;text-align:center;">25%</div>
<div class="t seg" style="left:1412px;top:244.0px;height:16px;line-height:16px;font-size:10.7px;color:#ececec;letter-spacing:-0.147px;width:230px;text-align:center;">0.0%L - 0.0%F - 0.0%M</div>
<div class="t seg" style="left:1643px;top:244.0px;height:16px;line-height:16px;font-size:10.7px;color:#ececec;width:94px;text-align:center;">0.0%</div>
<div class="t seg" style="left:1738px;top:244.0px;height:16px;line-height:16px;font-size:10.7px;color:#ececec;width:113px;text-align:center;">0.0%</div>
<div class="t seg" style="left:287px;top:263.0px;height:16px;line-height:16px;font-size:10.7px;color:#ececec;letter-spacing:-0.076px;">Clear Water Orb</div>
<div class="t seg" style="left:548px;top:263.0px;height:16px;line-height:16px;font-size:10.7px;color:#ececec;width:96px;text-align:center;">14,263</div>
<div class="t seg" style="left:645px;top:263.0px;height:16px;line-height:16px;font-size:10.7px;color:#ececec;width:105px;text-align:center;">379.07</div>
<div class="t seg" style="left:751px;top:263.0px;height:16px;line-height:16px;font-size:10.7px;color:#ececec;width:108px;text-align:center;">297.15</div>
<div class="t seg" style="left:860px;top:263.0px;height:16px;line-height:16px;font-size:10.7px;color:#ececec;width:74px;text-align:center;">309</div>
<div class="t seg" style="left:935px;top:263.0px;height:16px;line-height:16px;font-size:10.7px;color:#ececec;width:68px;text-align:center;">198</div>
<div class="t seg" style="left:1004px;top:263.0px;height:16px;line-height:16px;font-size:10.7px;color:#ececec;width:76px;text-align:center;">487</div>
<div class="t seg" style="left:1081px;top:263.0px;height:16px;line-height:16px;font-size:10.7px;color:#ececec;width:103px;text-align:center;"><span class="sf">❄</span><span class="bx"></span>Water</div>
<div class="t seg" style="left:1185px;top:263.0px;height:16px;line-height:16px;font-size:10.7px;color:#ececec;width:40px;text-align:center;">48</div>
<div class="t seg" style="left:1226px;top:263.0px;height:16px;line-height:16px;font-size:10.7px;color:#ececec;width:49px;text-align:center;">48</div>
<div class="t seg" style="left:1276px;top:263.0px;height:16px;line-height:16px;font-size:10.7px;color:#ececec;width:79px;text-align:center;">100.00</div>
<div class="t seg" style="left:1356px;top:263.0px;height:16px;line-height:16px;font-size:10.7px;color:#ececec;width:55px;text-align:center;">23%</div>
<div class="t seg" style="left:1412px;top:263.0px;height:16px;line-height:16px;font-size:10.7px;color:#ececec;letter-spacing:-0.147px;width:230px;text-align:center;">0.0%L - 0.0%F - 0.0%M</div>
<div class="t seg" style="left:1643px;top:263.0px;height:16px;line-height:16px;font-size:10.7px;color:#ececec;width:94px;text-align:center;">0.0%</div>
<div class="t seg" style="left:1738px;top:263.0px;height:16px;line-height:16px;font-size:10.7px;color:#ececec;width:113px;text-align:center;">0.0%</div>
<div class="t seg" style="left:287px;top:282.0px;height:16px;line-height:16px;font-size:10.7px;color:#ececec;letter-spacing:-0.243px;">Skill! Charge Rush</div>
<div class="t seg" style="left:548px;top:282.0px;height:16px;line-height:16px;font-size:10.7px;color:#ececec;width:96px;text-align:center;">9,660</div>
<div class="t seg" style="left:645px;top:282.0px;height:16px;line-height:16px;font-size:10.7px;color:#ececec;width:105px;text-align:center;">256.74</div>
<div class="t seg" style="left:751px;top:282.0px;height:16px;line-height:16px;font-size:10.7px;color:#ececec;width:108px;text-align:center;">9,660.00</div>
<div class="t seg" style="left:860px;top:282.0px;height:16px;line-height:16px;font-size:10.7px;color:#ececec;width:74px;text-align:center;">9,660</div>
<div class="t seg" style="left:935px;top:282.0px;height:16px;line-height:16px;font-size:10.7px;color:#ececec;width:68px;text-align:center;">9,660</div>
<div class="t seg" style="left:1004px;top:282.0px;height:16px;line-height:16px;font-size:10.7px;color:#ececec;width:76px;text-align:center;">9,660</div>
<div class="t seg" style="left:1079.2px;top:282.0px;height:16px;line-height:16px;font-size:10.7px;color:#ececec;width:103px;text-align:center;"><span class="sw">⚔</span><span class="bx" style="margin-right:0"></span>General</div>
<div class="t seg" style="left:1185px;top:282.0px;height:16px;line-height:16px;font-size:10.7px;color:#ececec;width:40px;text-align:center;">1</div>
<div class="t seg" style="left:1226px;top:282.0px;height:16px;line-height:16px;font-size:10.7px;color:#ececec;width:49px;text-align:center;">1</div>
<div class="t seg" style="left:1276px;top:282.0px;height:16px;line-height:16px;font-size:10.7px;color:#ececec;width:79px;text-align:center;">100.00</div>
<div class="t seg" style="left:1356px;top:282.0px;height:16px;line-height:16px;font-size:10.7px;color:#ececec;width:55px;text-align:center;">100%</div>
<div class="t seg" style="left:1412px;top:282.0px;height:16px;line-height:16px;font-size:10.7px;color:#ececec;letter-spacing:-0.147px;width:230px;text-align:center;">0.0%L - 0.0%F - 0.0%M</div>
<div class="t seg" style="left:1643px;top:282.0px;height:16px;line-height:16px;font-size:10.7px;color:#ececec;width:94px;text-align:center;">0.0%</div>
<div class="t seg" style="left:1738px;top:282.0px;height:16px;line-height:16px;font-size:10.7px;color:#ececec;width:113px;text-align:center;">0.0%</div>
<div class="t seg" style="left:287px;top:301.0px;height:16px;line-height:16px;font-size:10.7px;color:#ececec;letter-spacing:-0.258px;">Skill! Hunt Slash</div>
<div class="t seg" style="left:548px;top:301.0px;height:16px;line-height:16px;font-size:10.7px;color:#ececec;width:96px;text-align:center;">9,270</div>
<div class="t seg" style="left:645px;top:301.0px;height:16px;line-height:16px;font-size:10.7px;color:#ececec;width:105px;text-align:center;">246.37</div>
<div class="t seg" style="left:751px;top:301.0px;height:16px;line-height:16px;font-size:10.7px;color:#ececec;width:108px;text-align:center;">463.50</div>
<div class="t seg" style="left:860px;top:301.0px;height:16px;line-height:16px;font-size:10.7px;color:#ececec;width:74px;text-align:center;">412</div>
<div class="t seg" style="left:935px;top:301.0px;height:16px;line-height:16px;font-size:10.7px;color:#ececec;width:68px;text-align:center;">412</div>
<div class="t seg" style="left:1004px;top:301.0px;height:16px;line-height:16px;font-size:10.7px;color:#ececec;width:76px;text-align:center;">618</div>
<div class="t seg" style="left:1079.2px;top:301.0px;height:16px;line-height:16px;font-size:10.7px;color:#ececec;width:103px;text-align:center;"><span class="sw">⚔</span><span class="bx" style="margin-right:0"></span>General</div>
<div class="t seg" style="left:1185px;top:301.0px;height:16px;line-height:16px;font-size:10.7px;color:#ececec;width:40px;text-align:center;">20</div>
<div class="t seg" style="left:1226px;top:301.0px;height:16px;line-height:16px;font-size:10.7px;color:#ececec;width:49px;text-align:center;">20</div>
<div class="t seg" style="left:1276px;top:301.0px;height:16px;line-height:16px;font-size:10.7px;color:#ececec;width:79px;text-align:center;">100.00</div>
<div class="t seg" style="left:1356px;top:301.0px;height:16px;line-height:16px;font-size:10.7px;color:#ececec;width:55px;text-align:center;">25%</div>
<div class="t seg" style="left:1412px;top:301.0px;height:16px;line-height:16px;font-size:10.7px;color:#ececec;letter-spacing:-0.147px;width:230px;text-align:center;">0.0%L - 0.0%F - 0.0%M</div>
<div class="t seg" style="left:1643px;top:301.0px;height:16px;line-height:16px;font-size:10.7px;color:#ececec;width:94px;text-align:center;">0.0%</div>
<div class="t seg" style="left:1738px;top:301.0px;height:16px;line-height:16px;font-size:10.7px;color:#ececec;width:113px;text-align:center;">0.0%</div>
<div class="t seg" style="left:287px;top:320.0px;height:16px;line-height:16px;font-size:10.7px;color:#ececec;letter-spacing:-0.076px;">Water Vortex</div>
<div class="t seg" style="left:548px;top:320.0px;height:16px;line-height:16px;font-size:10.7px;color:#ececec;width:96px;text-align:center;">9,037</div>
<div class="t seg" style="left:645px;top:320.0px;height:16px;line-height:16px;font-size:10.7px;color:#ececec;width:105px;text-align:center;">240.18</div>
<div class="t seg" style="left:751px;top:320.0px;height:16px;line-height:16px;font-size:10.7px;color:#ececec;width:108px;text-align:center;">475.63</div>
<div class="t seg" style="left:860px;top:320.0px;height:16px;line-height:16px;font-size:10.7px;color:#ececec;width:74px;text-align:center;">395</div>
<div class="t seg" style="left:935px;top:320.0px;height:16px;line-height:16px;font-size:10.7px;color:#ececec;width:68px;text-align:center;">298</div>
<div class="t seg" style="left:1004px;top:320.0px;height:16px;line-height:16px;font-size:10.7px;color:#ececec;width:76px;text-align:center;">1,193</div>
<div class="t seg" style="left:1081px;top:320.0px;height:16px;line-height:16px;font-size:10.7px;color:#ececec;width:103px;text-align:center;"><span class="sf">❄</span><span class="bx"></span>Water</div>
<div class="t seg" style="left:1185px;top:320.0px;height:16px;line-height:16px;font-size:10.7px;color:#ececec;width:40px;text-align:center;">19</div>
<div class="t seg" style="left:1226px;top:320.0px;height:16px;line-height:16px;font-size:10.7px;color:#ececec;width:49px;text-align:center;">19</div>
<div class="t seg" style="left:1276px;top:320.0px;height:16px;line-height:16px;font-size:10.7px;color:#ececec;width:79px;text-align:center;">100.00</div>
<div class="t seg" style="left:1356px;top:320.0px;height:16px;line-height:16px;font-size:10.7px;color:#ececec;width:55px;text-align:center;">32%</div>
<div class="t seg" style="left:1412px;top:320.0px;height:16px;line-height:16px;font-size:10.7px;color:#ececec;letter-spacing:-0.147px;width:230px;text-align:center;">0.0%L - 0.0%F - 0.0%M</div>
<div class="t seg" style="left:1643px;top:320.0px;height:16px;line-height:16px;font-size:10.7px;color:#ececec;width:94px;text-align:center;">0.0%</div>
<div class="t seg" style="left:1738px;top:320.0px;height:16px;line-height:16px;font-size:10.7px;color:#ececec;width:113px;text-align:center;">0.0%</div>
<div class="t seg" style="left:287px;top:339.0px;height:16px;line-height:16px;font-size:10.7px;color:#ececec;letter-spacing:-0.174px;">Rain Strike</div>
<div class="t seg" style="left:548px;top:339.0px;height:16px;line-height:16px;font-size:10.7px;color:#ececec;width:96px;text-align:center;">3,654</div>
<div class="t seg" style="left:645px;top:339.0px;height:16px;line-height:16px;font-size:10.7px;color:#ececec;width:105px;text-align:center;">97.11</div>
<div class="t seg" style="left:751px;top:339.0px;height:16px;line-height:16px;font-size:10.7px;color:#ececec;width:108px;text-align:center;">365.40</div>
<div class="t seg" style="left:860px;top:339.0px;height:16px;line-height:16px;font-size:10.7px;color:#ececec;width:74px;text-align:center;">379</div>
<div class="t seg" style="left:935px;top:339.0px;height:16px;line-height:16px;font-size:10.7px;color:#ececec;width:68px;text-align:center;">289</div>
<div class="t seg" style="left:1004px;top:339.0px;height:16px;line-height:16px;font-size:10.7px;color:#ececec;width:76px;text-align:center;">459</div>
<div class="t seg" style="left:1081px;top:339.0px;height:16px;line-height:16px;font-size:10.7px;color:#ececec;width:103px;text-align:center;"><span class="sf">❄</span><span class="bx"></span>Water</div>
<div class="t seg" style="left:1185px;top:339.0px;height:16px;line-height:16px;font-size:10.7px;color:#ececec;width:40px;text-align:center;">10</div>
<div class="t seg" style="left:1226px;top:339.0px;height:16px;line-height:16px;font-size:10.7px;color:#ececec;width:49px;text-align:center;">10</div>
<div class="t seg" style="left:1276px;top:339.0px;height:16px;line-height:16px;font-size:10.7px;color:#ececec;width:79px;text-align:center;">100.00</div>
<div class="t seg" style="left:1356px;top:339.0px;height:16px;line-height:16px;font-size:10.7px;color:#ececec;width:55px;text-align:center;">20%</div>
<div class="t seg" style="left:1412px;top:339.0px;height:16px;line-height:16px;font-size:10.7px;color:#ececec;letter-spacing:-0.147px;width:230px;text-align:center;">0.0%L - 0.0%F - 0.0%M</div>
<div class="t seg" style="left:1643px;top:339.0px;height:16px;line-height:16px;font-size:10.7px;color:#ececec;width:94px;text-align:center;">0.0%</div>
<div class="t seg" style="left:1738px;top:339.0px;height:16px;line-height:16px;font-size:10.7px;color:#ececec;width:113px;text-align:center;">0.0%</div>
<div class="t seg" style="left:287px;top:358.0px;height:16px;line-height:16px;font-size:10.7px;color:#ececec;letter-spacing:-0.109px;">Clear Water Orb (Qing Long Rao Zhu)</div>
<div class="t seg" style="left:548px;top:358.0px;height:16px;line-height:16px;font-size:10.7px;color:#ececec;width:96px;text-align:center;">2,244</div>
<div class="t seg" style="left:645px;top:358.0px;height:16px;line-height:16px;font-size:10.7px;color:#ececec;width:105px;text-align:center;">59.64</div>
<div class="t seg" style="left:751px;top:358.0px;height:16px;line-height:16px;font-size:10.7px;color:#ececec;width:108px;text-align:center;">1,122.00</div>
<div class="t seg" style="left:860px;top:358.0px;height:16px;line-height:16px;font-size:10.7px;color:#ececec;width:74px;text-align:center;">1,302</div>
<div class="t seg" style="left:935px;top:358.0px;height:16px;line-height:16px;font-size:10.7px;color:#ececec;width:68px;text-align:center;">942</div>
<div class="t seg" style="left:1004px;top:358.0px;height:16px;line-height:16px;font-size:10.7px;color:#ececec;width:76px;text-align:center;">1,302</div>
<div class="t seg" style="left:1081px;top:358.0px;height:16px;line-height:16px;font-size:10.7px;color:#ececec;width:103px;text-align:center;"><span class="sf">❄</span><span class="bx"></span>Water</div>
<div class="t seg" style="left:1185px;top:358.0px;height:16px;line-height:16px;font-size:10.7px;color:#ececec;width:40px;text-align:center;">2</div>
<div class="t seg" style="left:1226px;top:358.0px;height:16px;line-height:16px;font-size:10.7px;color:#ececec;width:49px;text-align:center;">2</div>
<div class="t seg" style="left:1276px;top:358.0px;height:16px;line-height:16px;font-size:10.7px;color:#ececec;width:79px;text-align:center;">100.00</div>
<div class="t seg" style="left:1356px;top:358.0px;height:16px;line-height:16px;font-size:10.7px;color:#ececec;width:55px;text-align:center;">0%</div>
<div class="t seg" style="left:1412px;top:358.0px;height:16px;line-height:16px;font-size:10.7px;color:#ececec;width:230px;text-align:center;">-</div>
<div class="t seg" style="left:1643px;top:358.0px;height:16px;line-height:16px;font-size:10.7px;color:#ececec;width:94px;text-align:center;">0.0%</div>
<div class="t seg" style="left:1738px;top:358.0px;height:16px;line-height:16px;font-size:10.7px;color:#ececec;width:113px;text-align:center;">0.0%</div>
<div class="t seg" style="left:287px;top:377.0px;height:16px;line-height:16px;font-size:10.7px;color:#ececec;letter-spacing:-0.207px;">Rain Strike (Yu Da Chao Sheng)</div>
<div class="t seg" style="left:548px;top:377.0px;height:16px;line-height:16px;font-size:10.7px;color:#ececec;width:96px;text-align:center;">387</div>
<div class="t seg" style="left:645px;top:377.0px;height:16px;line-height:16px;font-size:10.7px;color:#ececec;width:105px;text-align:center;">10.29</div>
<div class="t seg" style="left:751px;top:377.0px;height:16px;line-height:16px;font-size:10.7px;color:#ececec;width:108px;text-align:center;">387.00</div>
<div class="t seg" style="left:860px;top:377.0px;height:16px;line-height:16px;font-size:10.7px;color:#ececec;width:74px;text-align:center;">387</div>
<div class="t seg" style="left:935px;top:377.0px;height:16px;line-height:16px;font-size:10.7px;color:#ececec;width:68px;text-align:center;">387</div>
<div class="t seg" style="left:1004px;top:377.0px;height:16px;line-height:16px;font-size:10.7px;color:#ececec;width:76px;text-align:center;">387</div>
<div class="t seg" style="left:1081px;top:377.0px;height:16px;line-height:16px;font-size:10.7px;color:#ececec;width:103px;text-align:center;"><span class="sf">❄</span><span class="bx"></span>Water</div>
<div class="t seg" style="left:1185px;top:377.0px;height:16px;line-height:16px;font-size:10.7px;color:#ececec;width:40px;text-align:center;">1</div>
<div class="t seg" style="left:1226px;top:377.0px;height:16px;line-height:16px;font-size:10.7px;color:#ececec;width:49px;text-align:center;">1</div>
<div class="t seg" style="left:1276px;top:377.0px;height:16px;line-height:16px;font-size:10.7px;color:#ececec;width:79px;text-align:center;">100.00</div>
<div class="t seg" style="left:1356px;top:377.0px;height:16px;line-height:16px;font-size:10.7px;color:#ececec;width:55px;text-align:center;">0%</div>
<div class="t seg" style="left:1412px;top:377.0px;height:16px;line-height:16px;font-size:10.7px;color:#ececec;width:230px;text-align:center;">-</div>
<div class="t seg" style="left:1643px;top:377.0px;height:16px;line-height:16px;font-size:10.7px;color:#ececec;width:94px;text-align:center;">0.0%</div>
<div class="t seg" style="left:1738px;top:377.0px;height:16px;line-height:16px;font-size:10.7px;color:#ececec;width:113px;text-align:center;">0.0%</div>
<div class="t seg" style="left:287px;top:396.0px;height:16px;line-height:16px;font-size:10.7px;color:#ececec;letter-spacing:-0.189px;">Lucky Strike (Ice Mage)</div>
<div class="t seg" style="left:548px;top:396.0px;height:16px;line-height:16px;font-size:10.7px;color:#ececec;width:96px;text-align:center;">0</div>
<div class="t seg" style="left:645px;top:396.0px;height:16px;line-height:16px;font-size:10.7px;color:#ececec;width:105px;text-align:center;">0.00</div>
<div class="t seg" style="left:751px;top:396.0px;height:16px;line-height:16px;font-size:10.7px;color:#ececec;width:108px;text-align:center;">0.00</div>
<div class="t seg" style="left:860px;top:396.0px;height:16px;line-height:16px;font-size:10.7px;color:#ececec;width:74px;text-align:center;">0</div>
<div class="t seg" style="left:935px;top:396.0px;height:16px;line-height:16px;font-size:10.7px;color:#ececec;width:68px;text-align:center;">0</div>
<div class="t seg" style="left:1004px;top:396.0px;height:16px;line-height:16px;font-size:10.7px;color:#ececec;width:76px;text-align:center;">0</div>
<div class="t seg" style="left:1081px;top:396.0px;height:16px;line-height:16px;font-size:10.7px;color:#ececec;width:103px;text-align:center;"><span class="sf">❄</span><span class="bx"></span>Water</div>
<div class="t seg" style="left:1185px;top:396.0px;height:16px;line-height:16px;font-size:10.7px;color:#ececec;width:40px;text-align:center;">22</div>
<div class="t seg" style="left:1226px;top:396.0px;height:16px;line-height:16px;font-size:10.7px;color:#ececec;width:49px;text-align:center;">22</div>
<div class="t seg" style="left:1276px;top:396.0px;height:16px;line-height:16px;font-size:10.7px;color:#ececec;width:79px;text-align:center;">100.00</div>
<div class="t seg" style="left:1356px;top:396.0px;height:16px;line-height:16px;font-size:10.7px;color:#ececec;width:55px;text-align:center;">27%</div>
<div class="t seg" style="left:1412px;top:396.0px;height:16px;line-height:16px;font-size:10.7px;color:#ececec;letter-spacing:-0.147px;width:230px;text-align:center;">0.0%L - 0.0%F - 0.0%M</div>
<div class="t seg" style="left:1643px;top:396.0px;height:16px;line-height:16px;font-size:10.7px;color:#ececec;width:94px;text-align:center;">0.0%</div>
<div class="t seg" style="left:1738px;top:396.0px;height:16px;line-height:16px;font-size:10.7px;color:#ececec;width:113px;text-align:center;">0.0%</div>
<div class="a" style="left:278px;top:569px;width:1575px;height:300px;background:#141418;border:1px solid #707070;box-sizing:border-box;"></div>
<div class="a" style="left:283px;top:574px;width:291px;height:291px;background:#141418;border:1px solid #8a8a8a;box-sizing:border-box;"></div>
<div class="t" style="left:287px;top:575.3px;height:16px;line-height:16px;font-size:11px;color:#d8d8d8;letter-spacing:0.070px;">EncDPS</div>
<svg class="a" style="left:283px;top:574px" width="291" height="291" viewBox="283 574 291 291"><path d="M428.5 719.5L428.50 578.50A141 141 0 0 1 468.22 854.79Z" fill="#c000c0" stroke="#c000c0" stroke-width="0.3"/><path d="M428.5 719.5L468.22 854.79A141 141 0 0 1 290.56 690.29Z" fill="#ff80ff" stroke="#ff80ff" stroke-width="0.3"/><path d="M428.5 719.5L290.56 690.29A141 141 0 0 1 307.79 646.64Z" fill="#0000c0" stroke="#0000c0" stroke-width="0.3"/><path d="M428.5 719.5L307.79 646.64A141 141 0 0 1 337.72 611.61Z" fill="#8080ff" stroke="#8080ff" stroke-width="0.3"/><path d="M428.5 719.5L337.72 611.61A141 141 0 0 1 353.48 600.11Z" fill="#00c0c0" stroke="#00c0c0" stroke-width="0.3"/><path d="M428.5 719.5L353.48 600.11A141 141 0 0 1 370.50 590.98Z" fill="#80ffff" stroke="#80ffff" stroke-width="0.3"/><path d="M428.5 719.5L370.50 590.98A141 141 0 0 1 386.88 584.78Z" fill="#00c000" stroke="#00c000" stroke-width="0.3"/><path d="M428.5 719.5L386.88 584.78A141 141 0 0 1 398.89 581.64Z" fill="#80ff80" stroke="#80ff80" stroke-width="0.3"/><path d="M428.5 719.5L398.89 581.64A141 141 0 0 1 407.16 580.12Z" fill="#c0c000" stroke="#c0c000" stroke-width="0.3"/><path d="M428.5 719.5L407.16 580.12A141 141 0 0 1 415.18 579.13Z" fill="#ffff80" stroke="#ffff80" stroke-width="0.3"/><path d="M428.5 719.5L415.18 579.13A141 141 0 0 1 423.03 578.61Z" fill="#c04000" stroke="#c04000" stroke-width="0.3"/><path d="M428.5 719.5L423.03 578.61A141 141 0 0 1 426.21 578.52Z" fill="#ffc080" stroke="#ffc080" stroke-width="0.3"/><path d="M428.5 719.5L426.21 578.52A141 141 0 0 1 428.16 578.50Z" fill="#c00000" stroke="#c00000" stroke-width="0.3"/><path d="M428.5 719.5L428.16 578.50A141 141 0 0 1 428.50 578.50Z" fill="#ff8080" stroke="#ff8080" stroke-width="0.3"/><circle cx="428.5" cy="719.5" r="141" fill="none" stroke="#9a9a9a" stroke-width="1"/></svg>
<div class="a" style="left:577px;top:574px;width:193px;height:197px;background:#8e8e8e;"></div>
<div class="a" style="left:578px;top:575px;width:191px;height:13px;background:#c000c0;"></div>
<div class="t" style="left:581px;top:575.0px;height:14px;line-height:14px;font-size:11px;color:#c4c4c4;letter-spacing:-0.444px;text-shadow:-1px 0 #000,1px 0 #000,0 -1px #000,0 1px #000;">45%</div>
<div class="t" style="left:607px;top:575.0px;height:14px;line-height:14px;font-size:11px;color:#c4c4c4;letter-spacing:0.166px;text-shadow:-1px 0 #000,1px 0 #000,0 -1px #000,0 1px #000;">Frost Spear</div>
<div class="a" style="left:578px;top:589px;width:191px;height:13px;background:#ff80ff;"></div>
<div class="t" style="left:581px;top:589.0px;height:14px;line-height:14px;font-size:11px;color:#141414;letter-spacing:-0.444px;-webkit-text-stroke:0.2px #111;">33%</div>
<div class="t" style="left:607px;top:589.0px;height:14px;line-height:14px;font-size:11px;color:#141414;letter-spacing:0.105px;-webkit-text-stroke:0.2px #111;">Meteor Storm</div>
<div class="a" style="left:578px;top:603px;width:191px;height:13px;background:#0000c0;"></div>
<div class="t" style="left:581px;top:603.0px;height:14px;line-height:14px;font-size:11px;color:#c4c4c4;letter-spacing:-0.353px;text-shadow:-1px 0 #000,1px 0 #000,0 -1px #000,0 1px #000;">5%</div>
<div class="t" style="left:607px;top:603.0px;height:14px;line-height:14px;font-size:11px;color:#c4c4c4;letter-spacing:0.137px;text-shadow:-1px 0 #000,1px 0 #000,0 -1px #000,0 1px #000;">Absolute Cold: Snow Hymn</div>
<div class="a" style="left:578px;top:617px;width:191px;height:13px;background:#8080ff;"></div>
<div class="t" style="left:581px;top:617.0px;height:14px;line-height:14px;font-size:11px;color:#141414;letter-spacing:-0.353px;-webkit-text-stroke:0.2px #111;">5%</div>
<div class="t" style="left:607px;top:617.0px;height:14px;line-height:14px;font-size:11px;color:#141414;letter-spacing:0.134px;-webkit-text-stroke:0.2px #111;">Piercing Ice Spear</div>
<div class="a" style="left:578px;top:631px;width:191px;height:13px;background:#00c0c0;"></div>
<div class="t" style="left:581px;top:631.0px;height:14px;line-height:14px;font-size:11px;color:#c4c4c4;letter-spacing:-0.353px;text-shadow:-1px 0 #000,1px 0 #000,0 -1px #000,0 1px #000;">2%</div>
<div class="t" style="left:607px;top:631.0px;height:14px;line-height:14px;font-size:11px;color:#c4c4c4;letter-spacing:0.300px;text-shadow:-1px 0 #000,1px 0 #000,0 -1px #000,0 1px #000;">Frost Burst</div>
<div class="a" style="left:578px;top:645px;width:191px;height:13px;background:#80ffff;"></div>
<div class="t" style="left:581px;top:645.0px;height:14px;line-height:14px;font-size:11px;color:#141414;letter-spacing:-0.353px;-webkit-text-stroke:0.2px #111;">2%</div>
<div class="t" style="left:607px;top:645.0px;height:14px;line-height:14px;font-size:11px;color:#141414;letter-spacing:0.249px;-webkit-text-stroke:0.2px #111;">Ice Arrow</div>
<div class="a" style="left:578px;top:659px;width:191px;height:13px;background:#00c000;"></div>
<div class="t" style="left:581px;top:659.0px;height:14px;line-height:14px;font-size:11px;color:#c4c4c4;letter-spacing:-0.353px;text-shadow:-1px 0 #000,1px 0 #000,0 -1px #000,0 1px #000;">2%</div>
<div class="t" style="left:607px;top:659.0px;height:14px;line-height:14px;font-size:11px;color:#c4c4c4;letter-spacing:0.180px;text-shadow:-1px 0 #000,1px 0 #000,0 -1px #000,0 1px #000;">Frost Comet</div>
<div class="a" style="left:578px;top:673px;width:191px;height:13px;background:#80ff80;"></div>
<div class="t" style="left:581px;top:673.0px;height:14px;line-height:14px;font-size:11px;color:#141414;letter-spacing:-0.353px;-webkit-text-stroke:0.2px #111;">1%</div>
<div class="t" style="left:607px;top:673.0px;height:14px;line-height:14px;font-size:11px;color:#141414;letter-spacing:0.195px;-webkit-text-stroke:0.2px #111;">Clear Water Orb</div>
<div class="a" style="left:578px;top:687px;width:191px;height:13px;background:#c0c000;"></div>
<div class="t" style="left:581px;top:687.0px;height:14px;line-height:14px;font-size:11px;color:#c4c4c4;letter-spacing:-0.353px;text-shadow:-1px 0 #000,1px 0 #000,0 -1px #000,0 1px #000;">1%</div>
<div class="t" style="left:607px;top:687.0px;height:14px;line-height:14px;font-size:11px;color:#c4c4c4;letter-spacing:0.150px;text-shadow:-1px 0 #000,1px 0 #000,0 -1px #000,0 1px #000;">Skill! Charge Rush</div>
<div class="a" style="left:578px;top:701px;width:191px;height:13px;background:#ffff80;"></div>
<div class="t" style="left:581px;top:701.0px;height:14px;line-height:14px;font-size:11px;color:#141414;letter-spacing:-0.353px;-webkit-text-stroke:0.2px #111;">1%</div>
<div class="t" style="left:607px;top:701.0px;height:14px;line-height:14px;font-size:11px;color:#141414;letter-spacing:0.147px;-webkit-text-stroke:0.2px #111;">Skill! Hunt Slash</div>
<div class="a" style="left:578px;top:715px;width:191px;height:13px;background:#c04000;"></div>
<div class="t" style="left:581px;top:715.0px;height:14px;line-height:14px;font-size:11px;color:#c4c4c4;letter-spacing:-0.353px;text-shadow:-1px 0 #000,1px 0 #000,0 -1px #000,0 1px #000;">1%</div>
<div class="t" style="left:607px;top:715.0px;height:14px;line-height:14px;font-size:11px;color:#c4c4c4;letter-spacing:0.211px;text-shadow:-1px 0 #000,1px 0 #000,0 -1px #000,0 1px #000;">Water Vortex</div>
<div class="a" style="left:578px;top:729px;width:191px;height:13px;background:#ffc080;"></div>
<div class="t" style="left:581px;top:729.0px;height:14px;line-height:14px;font-size:11px;color:#141414;letter-spacing:-0.353px;-webkit-text-stroke:0.2px #111;">0%</div>
<div class="t" style="left:607px;top:729.0px;height:14px;line-height:14px;font-size:11px;color:#141414;letter-spacing:0.273px;-webkit-text-stroke:0.2px #111;">Rain Strike</div>
<div class="a" style="left:578px;top:743px;width:191px;height:13px;background:#c00000;"></div>
<div class="t" style="left:581px;top:743.0px;height:14px;line-height:14px;font-size:11px;color:#c4c4c4;letter-spacing:-0.353px;text-shadow:-1px 0 #000,1px 0 #000,0 -1px #000,0 1px #000;">0%</div>
<div class="t" style="left:607px;top:743.0px;height:14px;line-height:14px;font-size:11px;color:#c4c4c4;letter-spacing:0.072px;text-shadow:-1px 0 #000,1px 0 #000,0 -1px #000,0 1px #000;">Clear Water Orb (Qing Long Rao Zhu)</div>
<div class="a" style="left:578px;top:757px;width:191px;height:13px;background:#ff8080;"></div>
<div class="t" style="left:581px;top:757.0px;height:14px;line-height:14px;font-size:11px;color:#141414;letter-spacing:-0.353px;-webkit-text-stroke:0.2px #111;">0%</div>
<div class="t" style="left:607px;top:757.0px;height:14px;line-height:14px;font-size:11px;color:#141414;letter-spacing:0.074px;-webkit-text-stroke:0.2px #111;">Rain Strike (Yu Da Chao Sheng)</div>
<svg class="a" style="left:459px;top:112px" width="14" height="21" viewBox="0 0 14 21"><path d="M1.5 1.5V17.5L5.3 13.9L7.9 19.6L10.2 18.6L7.7 13H12.6Z" fill="#fff" stroke="#000" stroke-width="1.1" stroke-linejoin="miter"/></svg>
</body></html>
